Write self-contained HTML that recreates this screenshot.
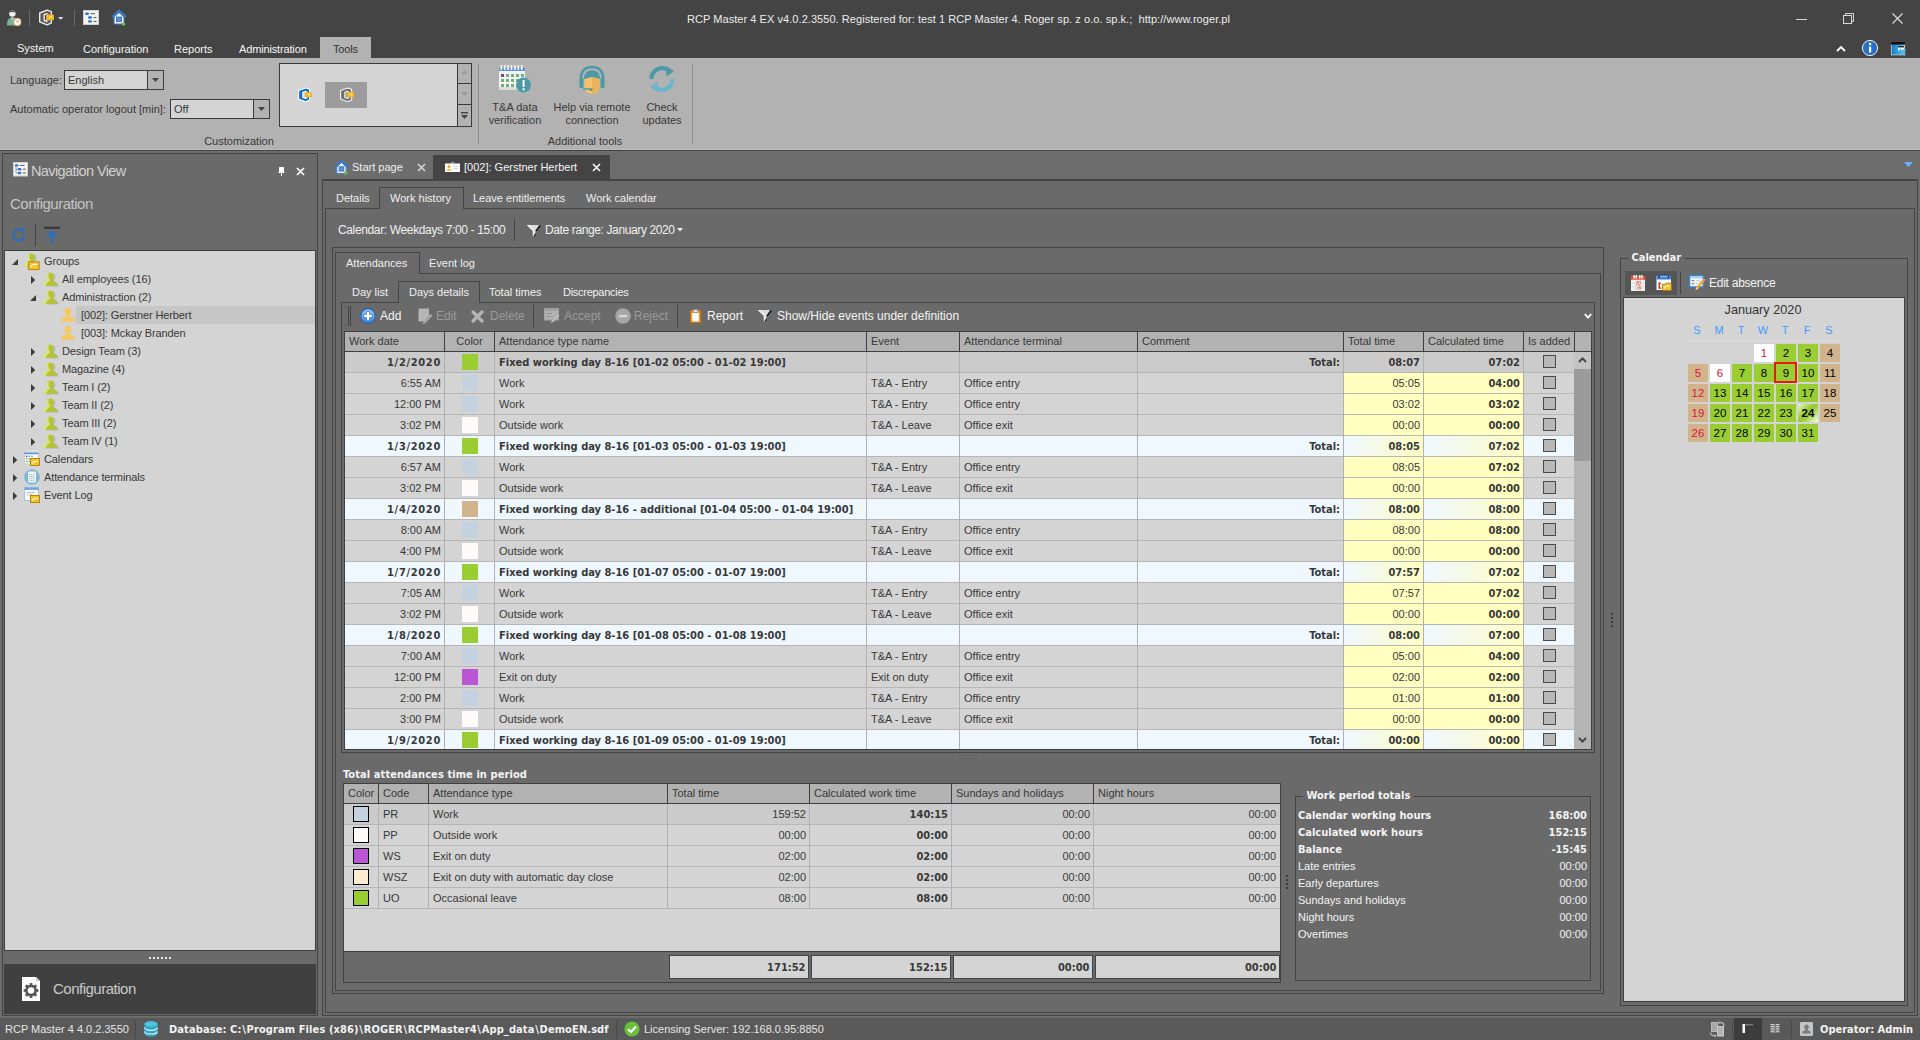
<!DOCTYPE html>
<html lang="en"><head><meta charset="utf-8"><title>RCP Master 4</title>
<style>
html,body{margin:0;padding:0;background:#6d6d6d;overflow:hidden}
#app{position:relative;width:1920px;height:1040px;overflow:hidden;background:#6d6d6d;font-family:"Liberation Sans","DejaVu Sans",sans-serif;font-size:11px;color:#383838}
#app span{position:static}
#app div,#app svg{position:absolute;box-sizing:border-box;white-space:nowrap}
#app svg{overflow:visible}
.b{font-family:"DejaVu Sans Condensed","DejaVu Sans","Liberation Sans",sans-serif;font-weight:bold;font-stretch:condensed;margin-top:1px}
.w{color:#f0f0f0}
.s12{font-size:12px}
.dis{color:#9a9a9a}
</style></head>
<body><div id="app">
<div style="left:0px;top:0px;width:1920px;height:58px;background:#444"></div>
<div style="left:0px;top:12.0px;height:14px;line-height:14px;width:1917px;text-align:center;color:#ececec;letter-spacing:0.055px">RCP Master 4 EX v4.0.2.3550. Registered for: test 1 RCP Master 4. Roger sp. z o.o. sp.k.;&nbsp; http://www.roger.pl</div>
<svg style="left:5px;top:9px" width="18" height="18" viewBox="0 0 18 18"><circle cx="7.4" cy="4.6" r="3.2" fill="#f6f2ea"/><path d="M4.4 3.6 C4.8 1.2 10 1.2 10.4 3.6 C9 2.8 6 2.8 4.4 3.6Z" fill="#3c4c5c"/><path d="M2 16.4 C2 10.4 4 8.6 7.4 8.6 C10.8 8.6 12.4 10 12.6 12 V16.4Z" fill="#78b09a"/><path d="M6.4 8.6 L7.4 11 L8.4 8.6Z" fill="#f6f2ea"/><circle cx="12.4" cy="13" r="3.7" fill="#fbf6ec" stroke="#e2b65c" stroke-width="0.9"/><path d="M12.4 13 L10.8 11.4 M12.4 13 L14 12.2" stroke="#b090a8" stroke-width="0.9"/></svg>
<div style="left:29px;top:10px;width:1px;height:16px;background:#6a6a6a"></div>
<svg style="left:38px;top:9px" width="17" height="18" viewBox="0 0 16 16.6"><path d="M1.6 3.6 L8.6 0.9 L12.6 2.3 V13 L8.6 14.8 L1.6 12Z M5.8 5.2 L8.6 4.3 V11.6 L5.8 10.5Z" fill="#5a5a5a" fill-rule="evenodd" stroke="#ececec" stroke-width="1.3" stroke-linejoin="round"/><path d="M8.6 3.9 L10.6 4.5 V11.2 L8.6 11.9Z" fill="#8a8a8a"/><rect x="8" y="5.2" width="7" height="5" fill="#f6b818"/><path d="M10.5 6.4H13L13.6 7.4V8.4H11.2Z" fill="#fbe08a"/></svg>
<svg style="left:58px;top:17px" width="6" height="4" viewBox="0 0 6 4"><path d="M0 0H5.4L2.7 2.8Z" fill="#e0e0e0"/></svg>
<div style="left:74px;top:10px;width:1px;height:16px;background:#6a6a6a"></div>
<svg style="left:83px;top:10px" width="16" height="16" viewBox="0 0 16 16"><rect x="0.5" y="0.5" width="15" height="14" fill="#f4f4f4" stroke="#cfcfcf"/><rect x="2" y="2.5" width="4" height="2.4" rx="1.2" fill="#2f78c4"/><rect x="5" y="6.3" width="4" height="2.4" rx="1.2" fill="#2f78c4"/><rect x="5" y="10.2" width="4" height="2.4" rx="1.2" fill="#2f78c4"/><path d="M7.5 3.7H12M10.5 7.5H13.5M10.5 11.4H13.5" stroke="#555" stroke-width="1"/></svg>
<svg style="left:111px;top:9px" width="16" height="17" viewBox="0 0 16 17"><path d="M1 8 L8 1.5 L15 8" fill="none" stroke="#3a78c8" stroke-width="2"/><path d="M3 8 L8 3.5 L13 8 V15 H3Z" fill="#eef3fb" stroke="#3a78c8" stroke-width="1"/><rect x="5.5" y="8" width="5" height="4.5" fill="#5b95dc" stroke="#2b62ab" stroke-width="0.8"/><circle cx="12.5" cy="15" r="1.8" fill="#6cc04a"/></svg>
<div style="left:1796px;top:19px;width:11px;height:1px;background:#d8d8d8"></div>
<svg style="left:1843px;top:13px" width="12" height="12" viewBox="0 0 12 12"><rect x="0.5" y="2.5" width="8" height="8" fill="none" stroke="#d8d8d8"/><path d="M2.5 2.5V0.5H10.5V8.5H8.5" fill="none" stroke="#d8d8d8"/></svg>
<svg style="left:1892px;top:13px" width="11" height="11" viewBox="0 0 11 11"><path d="M0.5 0.5L10.5 10.5M10.5 0.5L0.5 10.5" stroke="#e0e0e0" stroke-width="1.1"/></svg>
<div style="left:17px;top:41.0px;height:14px;line-height:14px;color:#f4f4f4">System</div>
<div style="left:83px;top:42.0px;height:14px;line-height:14px;color:#f4f4f4">Configuration</div>
<div style="left:174px;top:42.0px;height:14px;line-height:14px;color:#f4f4f4">Reports</div>
<div style="left:239px;top:42.0px;height:14px;line-height:14px;color:#f4f4f4;letter-spacing:-0.15px">Administration</div>
<div style="left:320px;top:37px;width:51px;height:22px;background:#b2b2b2"></div>
<div style="left:333px;top:42.0px;height:14px;line-height:14px;color:#333;letter-spacing:-0.2px">Tools</div>
<svg style="left:1836px;top:45px" width="10" height="7" viewBox="0 0 10 7"><path d="M1 6L5 2L9 6" fill="none" stroke="#fff" stroke-width="1.8"/></svg>
<svg style="left:1861px;top:39px" width="18" height="18" viewBox="0 0 18 18"><circle cx="9" cy="9" r="7.6" fill="#2c6fc2" stroke="#e8eefc" stroke-width="1"/><rect x="8" y="7.5" width="2.2" height="6" fill="#fff"/><circle cx="9.1" cy="5" r="1.3" fill="#fff"/></svg>
<svg style="left:1891px;top:42px" width="16" height="15" viewBox="0 0 16 15"><defs><linearGradient id="gw" x1="0" x2="1"><stop offset="0" stop-color="#0a78c8"/><stop offset="1" stop-color="#6cc4f4"/></linearGradient></defs><rect x="0.3" y="0.3" width="13.4" height="12.6" fill="url(#gw)" stroke="#e6ded6" stroke-width="0.7"/><rect x="0" y="0" width="14" height="2.6" fill="#141010"/><rect x="7" y="5" width="6" height="4" fill="#f4f4f4"/><rect x="7" y="4.2" width="6" height="1.2" fill="#141010"/><path d="M8.6 7.4 L14.2 13 M14.2 7.4 L8.6 13" stroke="#4db4f0" stroke-width="2.2"/></svg>
<div style="left:0px;top:58px;width:1920px;height:91px;background:#b2b2b2"></div>
<div style="left:0px;top:149px;width:1920px;height:1px;background:#bdbdbd"></div>
<div style="left:0px;top:150px;width:1920px;height:1px;background:#444"></div>
<div style="left:10px;top:73.0px;height:14px;line-height:14px;">Language:</div>
<div style="left:64px;top:70px;width:100px;height:20px;background:#d4d4d4;border:1px solid #3a3a3a"></div>
<div style="left:147px;top:71px;width:16px;height:18px;background:#b2b2b2;border-left:1px solid #3a3a3a"></div>
<svg style="left:152px;top:78px" width="7" height="4" viewBox="0 0 7 4"><path d="M0 0H7L3.5 4Z" fill="#444"/></svg>
<div style="left:68px;top:73.0px;height:14px;line-height:14px;">English</div>
<div style="left:10px;top:102.0px;height:14px;line-height:14px;">Automatic operator logout [min]:</div>
<div style="left:170px;top:99px;width:100px;height:20px;background:#d4d4d4;border:1px solid #3a3a3a"></div>
<div style="left:253px;top:100px;width:16px;height:18px;background:#b2b2b2;border-left:1px solid #3a3a3a"></div>
<svg style="left:258px;top:107px" width="7" height="4" viewBox="0 0 7 4"><path d="M0 0H7L3.5 4Z" fill="#444"/></svg>
<div style="left:174px;top:102.0px;height:14px;line-height:14px;">Off</div>
<div style="left:139px;top:134.0px;height:14px;line-height:14px;width:200px;text-align:center;">Customization</div>
<div style="left:279px;top:63px;width:193px;height:64px;background:#d4d4d4;border:1px solid #3a3a3a"></div>
<div style="left:457px;top:64px;width:14px;height:62px;background:#b2b2b2;border-left:1px solid #3a3a3a"></div>
<div style="left:457px;top:83px;width:14px;height:1px;background:#3a3a3a"></div>
<div style="left:457px;top:104px;width:14px;height:1px;background:#3a3a3a"></div>
<svg style="left:461px;top:70px" width="7" height="4" viewBox="0 0 7 4"><path d="M0 4H7L3.5 0Z" fill="#9a9a9a"/></svg>
<svg style="left:461px;top:92px" width="7" height="4" viewBox="0 0 7 4"><path d="M0 0H7L3.5 4Z" fill="#9a9a9a"/></svg>
<svg style="left:461px;top:112px" width="7" height="7" viewBox="0 0 7 7"><path d="M0 0H7V1.4H0Z M0 3H7L3.5 7Z" fill="#444"/></svg>
<div style="left:325px;top:82px;width:42px;height:26px;background:#9c9c9c"></div>
<svg style="left:297px;top:87px" width="16" height="16" viewBox="0 0 16 16"><path d="M1.6 3.6 L8.6 0.9 L12.6 2.3 V13 L8.6 14.8 L1.6 12Z M5.8 5.2 L8.6 4.3 V11.6 L5.8 10.5Z" fill="#0a6ed1" fill-rule="evenodd" stroke="#ffffff" stroke-width="1.1" stroke-linejoin="round"/><path d="M8.6 3.9 L10.6 4.5 V11.2 L8.6 11.9Z" fill="#d8e6f6"/><rect x="8" y="5.2" width="7" height="5" fill="#f6b818"/><path d="M10.5 6.4H13L13.6 7.4V8.4H11.2Z" fill="#fbe08a"/></svg>
<svg style="left:339px;top:87px" width="16" height="16" viewBox="0 0 16 16"><path d="M1.6 3.6 L8.6 0.9 L12.6 2.3 V13 L8.6 14.8 L1.6 12Z M5.8 5.2 L8.6 4.3 V11.6 L5.8 10.5Z" fill="#6e6e6e" fill-rule="evenodd" stroke="#f4f4f4" stroke-width="1.1" stroke-linejoin="round"/><path d="M8.6 3.9 L10.6 4.5 V11.2 L8.6 11.9Z" fill="#c8c8c8"/><rect x="8" y="5.2" width="7" height="5" fill="#f6b818"/><path d="M10.5 6.4H13L13.6 7.4V8.4H11.2Z" fill="#fbe08a"/></svg>
<div style="left:478px;top:64px;width:1px;height:80px;background:#8c8c8c"></div>
<div style="left:692px;top:64px;width:1px;height:80px;background:#8c8c8c"></div>
<svg style="left:498px;top:64px" width="34" height="30" viewBox="0 0 34 30"><rect x="1" y="4" width="26" height="22" fill="#f4f4f4"/><rect x="1" y="4" width="26" height="3" fill="#5b95dc"/><rect x="1" y="23" width="26" height="3" fill="#dcdcdc"/><rect x="2.5" y="1" width="1.6" height="5" fill="#f4f4f4"/><rect x="5.9" y="1" width="1.6" height="5" fill="#f4f4f4"/><rect x="9.3" y="1" width="1.6" height="5" fill="#f4f4f4"/><rect x="12.7" y="1" width="1.6" height="5" fill="#f4f4f4"/><rect x="16.1" y="1" width="1.6" height="5" fill="#f4f4f4"/><rect x="19.5" y="1" width="1.6" height="5" fill="#f4f4f4"/><rect x="22.9" y="1" width="1.6" height="5" fill="#f4f4f4"/><rect x="3" y="10" width="3" height="3" fill="#7a3f98"/><rect x="8" y="10" width="3" height="3" fill="#6db27d"/><rect x="13" y="10" width="3" height="3" fill="#6db27d"/><rect x="18" y="10" width="3" height="3" fill="#6db27d"/><rect x="23" y="10" width="3" height="3" fill="#6db27d"/><rect x="3" y="15" width="3" height="3" fill="#6db27d"/><rect x="8" y="15" width="3" height="3" fill="#6db27d"/><rect x="13" y="15" width="3" height="3" fill="#6db27d"/><rect x="18" y="15" width="3" height="3" fill="#6db27d"/><rect x="23" y="15" width="3" height="3" fill="#6db27d"/><rect x="3" y="20" width="3" height="3" fill="#6db27d"/><rect x="8" y="20" width="3" height="3" fill="#6db27d"/><rect x="13" y="20" width="3" height="3" fill="#6db27d"/><rect x="18" y="20" width="3" height="3" fill="#6db27d"/><rect x="23" y="20" width="3" height="3" fill="#6db27d"/><circle cx="25.5" cy="21" r="7.5" fill="#4d9aa6"/><rect x="24.6" y="16" width="2" height="7" fill="#fff"/><rect x="24.6" y="24.3" width="2" height="2" fill="#fff"/></svg>
<svg style="left:578px;top:65px" width="28" height="31" viewBox="0 0 28 31"><path d="M3 18 V13 C3 5 8 2 14 2 C20 2 25 5 25 13 V18" fill="none" stroke="#4d9aa6" stroke-width="2.6"/><path d="M6 14 C6 8 9 5.5 14 5.5 C19 5.5 22 8 22 14 L20 15 H8Z" fill="#4d9aa6"/><path d="M6.5 14 L14 12 L21.5 14 V21 C21.5 26 18 29 14 29 C10 29 6.5 26 6.5 21Z" fill="#f5c26b"/><path d="M14 12 L21.5 14 V21 C21.5 26 18 29 14 29Z" fill="#eab45a"/><rect x="1.5" y="13" width="4" height="10" rx="1.5" fill="#4d9aa6"/><rect x="22.5" y="13" width="4" height="10" rx="1.5" fill="#4d9aa6"/><path d="M5 24 H12" stroke="#4d9aa6" stroke-width="1.4"/><circle cx="13" cy="24.5" r="1.6" fill="#4d9aa6"/></svg>
<svg style="left:647px;top:64px" width="30" height="30" viewBox="0 0 30 30"><path d="M4.5 15 A10.5 10.5 0 0 1 22 7" fill="none" stroke="#4d9aa6" stroke-width="4.2"/><path d="M19 2 L27 7 L19.5 12.5Z" fill="#4d9aa6"/><path d="M25.5 15 A10.5 10.5 0 0 1 8 23" fill="none" stroke="#69b5c9" stroke-width="4.2"/><path d="M11 28 L3 23 L10.5 17.5Z" fill="#69b5c9"/></svg>
<div style="left:465px;top:100.0px;height:14px;line-height:14px;width:100px;text-align:center;">T&amp;A data</div>
<div style="left:465px;top:113.0px;height:14px;line-height:14px;width:100px;text-align:center;">verification</div>
<div style="left:532px;top:100.0px;height:14px;line-height:14px;width:120px;text-align:center;">Help via remote</div>
<div style="left:532px;top:113.0px;height:14px;line-height:14px;width:120px;text-align:center;">connection</div>
<div style="left:612px;top:100.0px;height:14px;line-height:14px;width:100px;text-align:center;">Check</div>
<div style="left:612px;top:113.0px;height:14px;line-height:14px;width:100px;text-align:center;">updates</div>
<div style="left:485px;top:134.0px;height:14px;line-height:14px;width:200px;text-align:center;">Additional tools</div>
<div style="left:2px;top:153px;width:316px;height:863px;background:#6a6a6a;border:1px solid #444"></div>
<svg style="left:13px;top:162px" width="15" height="15" viewBox="0 0 15 15"><rect x="0.5" y="0.5" width="14" height="13.5" fill="#f6f6f6" stroke="#cfcfcf"/><rect x="1.8" y="2.2" width="3.8" height="2.4" rx="1.2" fill="#2f78c4"/><rect x="4.6" y="6" width="3.8" height="2.4" rx="1.2" fill="#2f78c4"/><rect x="4.6" y="9.8" width="3.8" height="2.4" rx="1.2" fill="#2f78c4"/><path d="M7 3.4H11.5M9.8 7.2H12.8M9.8 11H12.8" stroke="#555" stroke-width="1"/><path d="M3 4.6V11H4.6M3 7.2H4.6" stroke="#777" stroke-width="0.7" fill="none"/></svg>
<div style="left:31px;top:162.0px;height:18px;line-height:18px;color:#d0d0d0;font-size:14.5px;letter-spacing:-0.6px">Navigation View</div>
<svg style="left:278px;top:167px" width="7" height="9" viewBox="0 0 7 9"><path d="M1.5 0.5H5.5V5H1.5Z M0.5 5.5H6.5 M3.5 5.5V9" fill="#fff" stroke="#fff" stroke-width="1"/></svg>
<svg style="left:296px;top:167px" width="9" height="9" viewBox="0 0 9 9"><path d="M1 1L8 8M8 1L1 8" stroke="#fff" stroke-width="1.7"/></svg>
<div style="left:10px;top:195.0px;height:18px;line-height:18px;color:#c4c4c4;font-size:15px;letter-spacing:-0.5px">Configuration</div>
<svg style="left:11px;top:227px" width="16" height="16" viewBox="0 0 16 16"><path d="M13.2 8 A5.6 5.6 0 1 1 10.6 3.2" fill="none" stroke="#2f6db5" stroke-width="2.4"/><path d="M8.6 0.8 L14.4 1.2 L12.6 6.6Z" fill="#2f6db5"/></svg>
<div style="left:35px;top:224px;width:1px;height:22px;background:#444"></div>
<svg style="left:44px;top:226px" width="16" height="18" viewBox="0 0 16 18"><rect x="0" y="0.6" width="16" height="2.4" fill="#3a3a3a"/><path d="M8 4 L14.4 10.2 H9.6 V17 H6.4 V10.2 H1.6Z" fill="#2f6db5"/></svg>
<div style="left:4px;top:250px;width:312px;height:701px;background:#d4d4d4;border:1px solid #3f3f3f"></div>
<div style="left:76px;top:306px;width:239px;height:18px;background:#c6c6c6"></div>
<svg style="left:12px;top:259px" width="6" height="6" viewBox="0 0 6 6"><path d="M6 0V6H0Z" fill="#3c3c3c"/></svg>
<svg style="left:22.5px;top:253px" width="16.6" height="16.6" viewBox="0 0 16 16"><path d="M9 1 C11.2 1 12.2 2.6 12.2 4.4 C12.2 6 11.4 7.2 10.6 7.8 V8.8 C13.6 9.4 15.4 10.4 15.4 13.4 H2.6 C2.6 10.4 4.4 9.4 7.4 8.8 V7.8 C6.6 7.2 5.8 6 5.8 4.4 C5.8 2.6 6.8 1 9 1Z" fill="#9a9a9a" opacity=".45" transform="translate(0.8,0.5)"/><path d="M8 0.6 C10.2 0.6 11.3 2.2 11.3 4 C11.3 5.6 10.5 6.9 9.7 7.5 V8.5 C12.8 9.1 14.6 10.2 14.6 13.2 H1.4 C1.4 10.2 3.2 9.1 6.3 8.5 V7.5 C5.5 6.9 4.7 5.6 4.7 4 C4.7 2.2 5.8 0.6 8 0.6Z" fill="#b4c531"/><path d="M7 0.9 C5.4 1.4 4.7 2.6 4.7 4 C4.7 5.6 5.5 6.9 6.3 7.5 V8.5 C3.2 9.1 1.4 10.2 1.4 13.2 H4 C4 10.6 5.6 9.6 7.6 9 V7 C6.6 6.2 6.2 5 6.2 3.8 C6.2 2.4 6.5 1.6 7 0.9Z" fill="#dfe87a"/><rect x="5.5" y="8.5" width="10" height="7.5" fill="#f4c430" stroke="#b8860b" stroke-width="1"/><path d="M7 13.5 L9.5 11 H14" stroke="#fff7d0" stroke-width="1.2" fill="none"/></svg>
<div style="left:44px;top:254.0px;height:14px;line-height:14px;letter-spacing:-0.12px">Groups</div>
<svg style="left:31px;top:276px" width="5" height="8" viewBox="0 0 5 8"><path d="M0 0L4.2 4L0 8Z" fill="#3c3c3c"/></svg>
<svg style="left:41.5px;top:272px" width="16.6" height="16.6" viewBox="0 0 16 16"><path d="M9 1 C11.2 1 12.2 2.6 12.2 4.4 C12.2 6 11.4 7.2 10.6 7.8 V8.8 C13.6 9.4 15.4 10.4 15.4 13.4 H2.6 C2.6 10.4 4.4 9.4 7.4 8.8 V7.8 C6.6 7.2 5.8 6 5.8 4.4 C5.8 2.6 6.8 1 9 1Z" fill="#9a9a9a" opacity=".45" transform="translate(0.8,0.5)"/><path d="M8 0.6 C10.2 0.6 11.3 2.2 11.3 4 C11.3 5.6 10.5 6.9 9.7 7.5 V8.5 C12.8 9.1 14.6 10.2 14.6 13.2 H1.4 C1.4 10.2 3.2 9.1 6.3 8.5 V7.5 C5.5 6.9 4.7 5.6 4.7 4 C4.7 2.2 5.8 0.6 8 0.6Z" fill="#b4c531"/><path d="M7 0.9 C5.4 1.4 4.7 2.6 4.7 4 C4.7 5.6 5.5 6.9 6.3 7.5 V8.5 C3.2 9.1 1.4 10.2 1.4 13.2 H4 C4 10.6 5.6 9.6 7.6 9 V7 C6.6 6.2 6.2 5 6.2 3.8 C6.2 2.4 6.5 1.6 7 0.9Z" fill="#dfe87a"/></svg>
<div style="left:62px;top:272.0px;height:14px;line-height:14px;letter-spacing:-0.12px">All employees (16)</div>
<svg style="left:30px;top:295px" width="6" height="6" viewBox="0 0 6 6"><path d="M6 0V6H0Z" fill="#3c3c3c"/></svg>
<svg style="left:41.5px;top:290px" width="16.6" height="16.6" viewBox="0 0 16 16"><path d="M9 1 C11.2 1 12.2 2.6 12.2 4.4 C12.2 6 11.4 7.2 10.6 7.8 V8.8 C13.6 9.4 15.4 10.4 15.4 13.4 H2.6 C2.6 10.4 4.4 9.4 7.4 8.8 V7.8 C6.6 7.2 5.8 6 5.8 4.4 C5.8 2.6 6.8 1 9 1Z" fill="#9a9a9a" opacity=".45" transform="translate(0.8,0.5)"/><path d="M8 0.6 C10.2 0.6 11.3 2.2 11.3 4 C11.3 5.6 10.5 6.9 9.7 7.5 V8.5 C12.8 9.1 14.6 10.2 14.6 13.2 H1.4 C1.4 10.2 3.2 9.1 6.3 8.5 V7.5 C5.5 6.9 4.7 5.6 4.7 4 C4.7 2.2 5.8 0.6 8 0.6Z" fill="#b4c531"/><path d="M7 0.9 C5.4 1.4 4.7 2.6 4.7 4 C4.7 5.6 5.5 6.9 6.3 7.5 V8.5 C3.2 9.1 1.4 10.2 1.4 13.2 H4 C4 10.6 5.6 9.6 7.6 9 V7 C6.6 6.2 6.2 5 6.2 3.8 C6.2 2.4 6.5 1.6 7 0.9Z" fill="#dfe87a"/></svg>
<div style="left:62px;top:290.0px;height:14px;line-height:14px;letter-spacing:-0.12px">Administraction (2)</div>
<svg style="left:60px;top:307px" width="16" height="16" viewBox="0 0 16 16"><path d="M8 0.8 C10.3 0.8 11.5 2.6 11.5 4.6 C11.5 6.4 10.6 7.8 9.8 8.4 V9.6 C13 10.2 15.2 11.4 15.2 14.8 H0.8 C0.8 11.4 3 10.2 6.2 9.6 V8.4 C5.4 7.8 4.5 6.4 4.5 4.6 C4.5 2.6 5.7 0.8 8 0.8Z" fill="#f3c866"/></svg>
<div style="left:81px;top:308.0px;height:14px;line-height:14px;letter-spacing:-0.12px">[002]: Gerstner Herbert</div>
<svg style="left:60px;top:325px" width="16" height="16" viewBox="0 0 16 16"><path d="M8 0.8 C10.3 0.8 11.5 2.6 11.5 4.6 C11.5 6.4 10.6 7.8 9.8 8.4 V9.6 C13 10.2 15.2 11.4 15.2 14.8 H0.8 C0.8 11.4 3 10.2 6.2 9.6 V8.4 C5.4 7.8 4.5 6.4 4.5 4.6 C4.5 2.6 5.7 0.8 8 0.8Z" fill="#f3c866"/></svg>
<div style="left:81px;top:326.0px;height:14px;line-height:14px;letter-spacing:-0.12px">[003]: Mckay Branden</div>
<svg style="left:31px;top:348px" width="5" height="8" viewBox="0 0 5 8"><path d="M0 0L4.2 4L0 8Z" fill="#3c3c3c"/></svg>
<svg style="left:41.5px;top:344px" width="16.6" height="16.6" viewBox="0 0 16 16"><path d="M9 1 C11.2 1 12.2 2.6 12.2 4.4 C12.2 6 11.4 7.2 10.6 7.8 V8.8 C13.6 9.4 15.4 10.4 15.4 13.4 H2.6 C2.6 10.4 4.4 9.4 7.4 8.8 V7.8 C6.6 7.2 5.8 6 5.8 4.4 C5.8 2.6 6.8 1 9 1Z" fill="#9a9a9a" opacity=".45" transform="translate(0.8,0.5)"/><path d="M8 0.6 C10.2 0.6 11.3 2.2 11.3 4 C11.3 5.6 10.5 6.9 9.7 7.5 V8.5 C12.8 9.1 14.6 10.2 14.6 13.2 H1.4 C1.4 10.2 3.2 9.1 6.3 8.5 V7.5 C5.5 6.9 4.7 5.6 4.7 4 C4.7 2.2 5.8 0.6 8 0.6Z" fill="#b4c531"/><path d="M7 0.9 C5.4 1.4 4.7 2.6 4.7 4 C4.7 5.6 5.5 6.9 6.3 7.5 V8.5 C3.2 9.1 1.4 10.2 1.4 13.2 H4 C4 10.6 5.6 9.6 7.6 9 V7 C6.6 6.2 6.2 5 6.2 3.8 C6.2 2.4 6.5 1.6 7 0.9Z" fill="#dfe87a"/></svg>
<div style="left:62px;top:344.0px;height:14px;line-height:14px;letter-spacing:-0.12px">Design Team (3)</div>
<svg style="left:31px;top:366px" width="5" height="8" viewBox="0 0 5 8"><path d="M0 0L4.2 4L0 8Z" fill="#3c3c3c"/></svg>
<svg style="left:41.5px;top:362px" width="16.6" height="16.6" viewBox="0 0 16 16"><path d="M9 1 C11.2 1 12.2 2.6 12.2 4.4 C12.2 6 11.4 7.2 10.6 7.8 V8.8 C13.6 9.4 15.4 10.4 15.4 13.4 H2.6 C2.6 10.4 4.4 9.4 7.4 8.8 V7.8 C6.6 7.2 5.8 6 5.8 4.4 C5.8 2.6 6.8 1 9 1Z" fill="#9a9a9a" opacity=".45" transform="translate(0.8,0.5)"/><path d="M8 0.6 C10.2 0.6 11.3 2.2 11.3 4 C11.3 5.6 10.5 6.9 9.7 7.5 V8.5 C12.8 9.1 14.6 10.2 14.6 13.2 H1.4 C1.4 10.2 3.2 9.1 6.3 8.5 V7.5 C5.5 6.9 4.7 5.6 4.7 4 C4.7 2.2 5.8 0.6 8 0.6Z" fill="#b4c531"/><path d="M7 0.9 C5.4 1.4 4.7 2.6 4.7 4 C4.7 5.6 5.5 6.9 6.3 7.5 V8.5 C3.2 9.1 1.4 10.2 1.4 13.2 H4 C4 10.6 5.6 9.6 7.6 9 V7 C6.6 6.2 6.2 5 6.2 3.8 C6.2 2.4 6.5 1.6 7 0.9Z" fill="#dfe87a"/></svg>
<div style="left:62px;top:362.0px;height:14px;line-height:14px;letter-spacing:-0.12px">Magazine (4)</div>
<svg style="left:31px;top:384px" width="5" height="8" viewBox="0 0 5 8"><path d="M0 0L4.2 4L0 8Z" fill="#3c3c3c"/></svg>
<svg style="left:41.5px;top:380px" width="16.6" height="16.6" viewBox="0 0 16 16"><path d="M9 1 C11.2 1 12.2 2.6 12.2 4.4 C12.2 6 11.4 7.2 10.6 7.8 V8.8 C13.6 9.4 15.4 10.4 15.4 13.4 H2.6 C2.6 10.4 4.4 9.4 7.4 8.8 V7.8 C6.6 7.2 5.8 6 5.8 4.4 C5.8 2.6 6.8 1 9 1Z" fill="#9a9a9a" opacity=".45" transform="translate(0.8,0.5)"/><path d="M8 0.6 C10.2 0.6 11.3 2.2 11.3 4 C11.3 5.6 10.5 6.9 9.7 7.5 V8.5 C12.8 9.1 14.6 10.2 14.6 13.2 H1.4 C1.4 10.2 3.2 9.1 6.3 8.5 V7.5 C5.5 6.9 4.7 5.6 4.7 4 C4.7 2.2 5.8 0.6 8 0.6Z" fill="#b4c531"/><path d="M7 0.9 C5.4 1.4 4.7 2.6 4.7 4 C4.7 5.6 5.5 6.9 6.3 7.5 V8.5 C3.2 9.1 1.4 10.2 1.4 13.2 H4 C4 10.6 5.6 9.6 7.6 9 V7 C6.6 6.2 6.2 5 6.2 3.8 C6.2 2.4 6.5 1.6 7 0.9Z" fill="#dfe87a"/></svg>
<div style="left:62px;top:380.0px;height:14px;line-height:14px;letter-spacing:-0.12px">Team I (2)</div>
<svg style="left:31px;top:402px" width="5" height="8" viewBox="0 0 5 8"><path d="M0 0L4.2 4L0 8Z" fill="#3c3c3c"/></svg>
<svg style="left:41.5px;top:398px" width="16.6" height="16.6" viewBox="0 0 16 16"><path d="M9 1 C11.2 1 12.2 2.6 12.2 4.4 C12.2 6 11.4 7.2 10.6 7.8 V8.8 C13.6 9.4 15.4 10.4 15.4 13.4 H2.6 C2.6 10.4 4.4 9.4 7.4 8.8 V7.8 C6.6 7.2 5.8 6 5.8 4.4 C5.8 2.6 6.8 1 9 1Z" fill="#9a9a9a" opacity=".45" transform="translate(0.8,0.5)"/><path d="M8 0.6 C10.2 0.6 11.3 2.2 11.3 4 C11.3 5.6 10.5 6.9 9.7 7.5 V8.5 C12.8 9.1 14.6 10.2 14.6 13.2 H1.4 C1.4 10.2 3.2 9.1 6.3 8.5 V7.5 C5.5 6.9 4.7 5.6 4.7 4 C4.7 2.2 5.8 0.6 8 0.6Z" fill="#b4c531"/><path d="M7 0.9 C5.4 1.4 4.7 2.6 4.7 4 C4.7 5.6 5.5 6.9 6.3 7.5 V8.5 C3.2 9.1 1.4 10.2 1.4 13.2 H4 C4 10.6 5.6 9.6 7.6 9 V7 C6.6 6.2 6.2 5 6.2 3.8 C6.2 2.4 6.5 1.6 7 0.9Z" fill="#dfe87a"/></svg>
<div style="left:62px;top:398.0px;height:14px;line-height:14px;letter-spacing:-0.12px">Team II (2)</div>
<svg style="left:31px;top:420px" width="5" height="8" viewBox="0 0 5 8"><path d="M0 0L4.2 4L0 8Z" fill="#3c3c3c"/></svg>
<svg style="left:41.5px;top:416px" width="16.6" height="16.6" viewBox="0 0 16 16"><path d="M9 1 C11.2 1 12.2 2.6 12.2 4.4 C12.2 6 11.4 7.2 10.6 7.8 V8.8 C13.6 9.4 15.4 10.4 15.4 13.4 H2.6 C2.6 10.4 4.4 9.4 7.4 8.8 V7.8 C6.6 7.2 5.8 6 5.8 4.4 C5.8 2.6 6.8 1 9 1Z" fill="#9a9a9a" opacity=".45" transform="translate(0.8,0.5)"/><path d="M8 0.6 C10.2 0.6 11.3 2.2 11.3 4 C11.3 5.6 10.5 6.9 9.7 7.5 V8.5 C12.8 9.1 14.6 10.2 14.6 13.2 H1.4 C1.4 10.2 3.2 9.1 6.3 8.5 V7.5 C5.5 6.9 4.7 5.6 4.7 4 C4.7 2.2 5.8 0.6 8 0.6Z" fill="#b4c531"/><path d="M7 0.9 C5.4 1.4 4.7 2.6 4.7 4 C4.7 5.6 5.5 6.9 6.3 7.5 V8.5 C3.2 9.1 1.4 10.2 1.4 13.2 H4 C4 10.6 5.6 9.6 7.6 9 V7 C6.6 6.2 6.2 5 6.2 3.8 C6.2 2.4 6.5 1.6 7 0.9Z" fill="#dfe87a"/></svg>
<div style="left:62px;top:416.0px;height:14px;line-height:14px;letter-spacing:-0.12px">Team III (2)</div>
<svg style="left:31px;top:438px" width="5" height="8" viewBox="0 0 5 8"><path d="M0 0L4.2 4L0 8Z" fill="#3c3c3c"/></svg>
<svg style="left:41.5px;top:434px" width="16.6" height="16.6" viewBox="0 0 16 16"><path d="M9 1 C11.2 1 12.2 2.6 12.2 4.4 C12.2 6 11.4 7.2 10.6 7.8 V8.8 C13.6 9.4 15.4 10.4 15.4 13.4 H2.6 C2.6 10.4 4.4 9.4 7.4 8.8 V7.8 C6.6 7.2 5.8 6 5.8 4.4 C5.8 2.6 6.8 1 9 1Z" fill="#9a9a9a" opacity=".45" transform="translate(0.8,0.5)"/><path d="M8 0.6 C10.2 0.6 11.3 2.2 11.3 4 C11.3 5.6 10.5 6.9 9.7 7.5 V8.5 C12.8 9.1 14.6 10.2 14.6 13.2 H1.4 C1.4 10.2 3.2 9.1 6.3 8.5 V7.5 C5.5 6.9 4.7 5.6 4.7 4 C4.7 2.2 5.8 0.6 8 0.6Z" fill="#b4c531"/><path d="M7 0.9 C5.4 1.4 4.7 2.6 4.7 4 C4.7 5.6 5.5 6.9 6.3 7.5 V8.5 C3.2 9.1 1.4 10.2 1.4 13.2 H4 C4 10.6 5.6 9.6 7.6 9 V7 C6.6 6.2 6.2 5 6.2 3.8 C6.2 2.4 6.5 1.6 7 0.9Z" fill="#dfe87a"/></svg>
<div style="left:62px;top:434.0px;height:14px;line-height:14px;letter-spacing:-0.12px">Team IV (1)</div>
<svg style="left:13px;top:456px" width="5" height="8" viewBox="0 0 5 8"><path d="M0 0L4.2 4L0 8Z" fill="#3c3c3c"/></svg>
<svg style="left:24px;top:450px" width="16" height="16" viewBox="0 0 16 16"><rect x="0.5" y="2" width="14" height="12" fill="#fafafa" stroke="#c8c8c8"/><rect x="0.5" y="2" width="14" height="2.2" fill="#5b95dc"/><rect x="1.6" y="0" width="1" height="3" fill="#e8e8e8"/><rect x="3.6" y="0" width="1" height="3" fill="#e8e8e8"/><rect x="5.6" y="0" width="1" height="3" fill="#e8e8e8"/><rect x="7.6" y="0" width="1" height="3" fill="#e8e8e8"/><rect x="9.6" y="0" width="1" height="3" fill="#e8e8e8"/><rect x="11.6" y="0" width="1" height="3" fill="#e8e8e8"/><rect x="13.6" y="0" width="1" height="3" fill="#e8e8e8"/><rect x="2.0" y="5.6" width="1.5" height="1.5" fill="#7a3f98"/><rect x="4.6" y="5.6" width="1.5" height="1.5" fill="#6db27d"/><rect x="7.2" y="5.6" width="1.5" height="1.5" fill="#6db27d"/><rect x="2.0" y="8.2" width="1.5" height="1.5" fill="#6db27d"/><rect x="4.6" y="8.2" width="1.5" height="1.5" fill="#6db27d"/><rect x="7.2" y="8.2" width="1.5" height="1.5" fill="#6db27d"/><rect x="2.0" y="10.8" width="1.5" height="1.5" fill="#6db27d"/><rect x="4.6" y="10.8" width="1.5" height="1.5" fill="#6db27d"/><rect x="7.2" y="10.8" width="1.5" height="1.5" fill="#6db27d"/><rect x="6.5" y="8.5" width="9" height="7" fill="#f4c430" stroke="#b8860b" stroke-width="1"/><path d="M8 13.5 L10 11.5 H14" stroke="#fff7d0" stroke-width="1.1" fill="none"/></svg>
<div style="left:44px;top:452.0px;height:14px;line-height:14px;letter-spacing:-0.12px">Calendars</div>
<svg style="left:13px;top:474px" width="5" height="8" viewBox="0 0 5 8"><path d="M0 0L4.2 4L0 8Z" fill="#3c3c3c"/></svg>
<svg style="left:24px;top:469px" width="16" height="16" viewBox="0 0 16 16"><circle cx="8" cy="8" r="7.8" fill="#7db9d6"/><rect x="4" y="2.6" width="8" height="10.8" rx="1" fill="#f4f8fb"/><rect x="5.2" y="5" width="1.2" height="1.2" fill="#9fb9c8"/><rect x="7.2" y="5" width="1.2" height="1.2" fill="#9fb9c8"/><rect x="9.2" y="5" width="1.2" height="1.2" fill="#9fb9c8"/><rect x="5.2" y="7" width="1.2" height="1.2" fill="#9fb9c8"/><rect x="7.2" y="7" width="1.2" height="1.2" fill="#9fb9c8"/><rect x="9.2" y="7" width="1.2" height="1.2" fill="#9fb9c8"/><rect x="5.2" y="9" width="1.2" height="1.2" fill="#9fb9c8"/><rect x="7.2" y="9" width="1.2" height="1.2" fill="#9fb9c8"/><rect x="9.2" y="9" width="1.2" height="1.2" fill="#9fb9c8"/><rect x="5.2" y="11" width="1.2" height="1.2" fill="#9fb9c8"/><rect x="7.2" y="11" width="1.2" height="1.2" fill="#9fb9c8"/><rect x="9.2" y="11" width="1.2" height="1.2" fill="#9fb9c8"/></svg>
<div style="left:44px;top:470.0px;height:14px;line-height:14px;letter-spacing:-0.12px">Attendance terminals</div>
<svg style="left:13px;top:492px" width="5" height="8" viewBox="0 0 5 8"><path d="M0 0L4.2 4L0 8Z" fill="#3c3c3c"/></svg>
<svg style="left:24px;top:487px" width="16" height="16" viewBox="0 0 16 16"><rect x="0.5" y="0.5" width="14" height="13" fill="#fafafa" stroke="#9fc4e8"/><rect x="0.5" y="0.5" width="14" height="2.4" fill="#6aa5e0"/><path d="M2.5 5.5H11M2.5 7.8H8" stroke="#bbb" stroke-width="1"/><rect x="6.5" y="8.5" width="9" height="7" fill="#f4c430" stroke="#b8860b" stroke-width="1"/><path d="M8 13.5 L10 11.5 H14" stroke="#fff7d0" stroke-width="1.1" fill="none"/></svg>
<div style="left:44px;top:488.0px;height:14px;line-height:14px;letter-spacing:-0.12px">Event Log</div>
<div style="left:149px;top:957px;width:2px;height:2px;background:#e8e8e8"></div>
<div style="left:153px;top:957px;width:2px;height:2px;background:#e8e8e8"></div>
<div style="left:157px;top:957px;width:2px;height:2px;background:#e8e8e8"></div>
<div style="left:161px;top:957px;width:2px;height:2px;background:#e8e8e8"></div>
<div style="left:165px;top:957px;width:2px;height:2px;background:#e8e8e8"></div>
<div style="left:169px;top:957px;width:2px;height:2px;background:#e8e8e8"></div>
<div style="left:4px;top:964px;width:312px;height:50px;background:#404040"></div>
<svg style="left:22px;top:977px" width="18" height="24" viewBox="0 0 18 24"><path d="M0 0H14L18 4V24H0Z" fill="#fff"/><path d="M14 0V4H18Z" fill="#ccc"/><g transform="translate(9,13.5)"><circle r="4.6" fill="none" stroke="#555" stroke-width="2.6"/><rect x="-1.3" y="-7.4" width="2.6" height="3" fill="#555" transform="rotate(0)"/><rect x="-1.3" y="-7.4" width="2.6" height="3" fill="#555" transform="rotate(45)"/><rect x="-1.3" y="-7.4" width="2.6" height="3" fill="#555" transform="rotate(90)"/><rect x="-1.3" y="-7.4" width="2.6" height="3" fill="#555" transform="rotate(135)"/><rect x="-1.3" y="-7.4" width="2.6" height="3" fill="#555" transform="rotate(180)"/><rect x="-1.3" y="-7.4" width="2.6" height="3" fill="#555" transform="rotate(225)"/><rect x="-1.3" y="-7.4" width="2.6" height="3" fill="#555" transform="rotate(270)"/><rect x="-1.3" y="-7.4" width="2.6" height="3" fill="#555" transform="rotate(315)"/></g></svg>
<div style="left:53px;top:980.0px;height:18px;line-height:18px;color:#c9c9c9;font-size:15px;letter-spacing:-0.5px">Configuration</div>
<div style="left:0px;top:1018px;width:1920px;height:22px;background:#595959"></div>
<div style="left:5px;top:1022.0px;height:14px;line-height:14px;color:#e6e6e6">RCP Master 4 4.0.2.3550</div>
<div style="left:135px;top:1020px;width:1px;height:18px;background:#4a4a4a"></div>
<svg style="left:144px;top:1021px" width="14" height="16" viewBox="0 0 14 16"><path d="M0.5 3 A6.5 2.8 0 0 1 13.5 3 V13 A6.5 2.8 0 0 1 0.5 13Z" fill="#2fa6c6"/><ellipse cx="7" cy="3" rx="6.5" ry="2.8" fill="#4fc4de"/><path d="M0.5 6.6 A6.5 2.8 0 0 0 13.5 6.6 M0.5 10.2 A6.5 2.8 0 0 0 13.5 10.2" stroke="#d8f2f8" stroke-width="1.1" fill="none"/></svg>
<div class="b" style="left:169px;top:1022.0px;height:14px;line-height:14px;color:#f2f2f2;letter-spacing:0.1px">Database: C:<span style="padding:0 0.7px">\</span>Program Files (x86)<span style="padding:0 0.7px">\</span>ROGER<span style="padding:0 0.7px">\</span>RCPMaster4<span style="padding:0 0.7px">\</span>App_data<span style="padding:0 0.7px">\</span>DemoEN.sdf</div>
<div style="left:616px;top:1020px;width:1px;height:18px;background:#4a4a4a"></div>
<svg style="left:624px;top:1021px" width="16" height="16" viewBox="0 0 16 16"><circle cx="8" cy="8" r="7.6" fill="#6abf3a"/><path d="M4 8.2 L7 11 L12 5.4" fill="none" stroke="#fff" stroke-width="2.2"/></svg>
<div style="left:644px;top:1022.0px;height:14px;line-height:14px;color:#e6e6e6">Licensing Server: 192.168.0.95:8850</div>
<svg style="left:1709px;top:1021px" width="17" height="16" viewBox="0 0 17 16"><path d="M2 1H9V11H2Z" fill="#b8b8b8"/><path d="M3 3H8M3 5H8M3 7H8M3 9H8" stroke="#8a8a8a" stroke-width="0.8"/><path d="M8 5H15V15.5H8Z" fill="#c8c8c8"/><path d="M9 7H14M9 9H14M9 11H14M9 13H14" stroke="#909090" stroke-width="0.8"/><path d="M11 1.5 C13.5 1.5 15 3 15 5" stroke="#b0b0b0" stroke-width="1.4" fill="none"/><path d="M9.6 0 V3.4 L12.4 1.6Z" fill="#b0b0b0"/><path d="M6 15 C3.5 15 1.5 13.5 1.5 11.5" stroke="#b0b0b0" stroke-width="1.4" fill="none"/><path d="M7 13 V16.4 L4.4 14.8Z" fill="#b0b0b0"/></svg>
<div style="left:1732px;top:1020px;width:1px;height:18px;background:#4a4a4a"></div>
<div style="left:1734px;top:1018px;width:28px;height:22px;background:#3c3c3c"></div>
<svg style="left:1742px;top:1024px" width="11" height="9" viewBox="0 0 11 9"><rect x="0.5" y="0" width="10.5" height="1.4" fill="#7a7a7a"/><rect x="0.5" y="0" width="2.5" height="9" fill="#fafafa"/></svg>
<svg style="left:1770px;top:1024px" width="10" height="10" viewBox="0 0 10 10"><path d="M0.5 0.6H4.2M0.5 2.4H4.2M0.5 4.2H4.2M0.5 6H4.2M0.5 7.8H4.2 M5.8 0.6H9.5M5.8 2.4H9.5M5.8 4.2H9.5M5.8 6H9.5M5.8 7.8H9.5" stroke="#f0f0f0" stroke-width="0.9"/><path d="M4.9 0V9" stroke="#d0d0d0" stroke-width="0.6"/></svg>
<div style="left:1791px;top:1020px;width:1px;height:18px;background:#4a4a4a"></div>
<svg style="left:1800px;top:1022px" width="13" height="14" viewBox="0 0 13 14"><rect width="13" height="14" rx="1.2" fill="#c4c4c4"/><path d="M6.5 2.6 C8.2 2.6 8.8 3.8 8.8 5 C8.8 6.2 8.2 7 7.8 7.4 V8.2 C9.8 8.6 10.8 9.4 10.8 11.4 H2.2 C2.2 9.4 3.2 8.6 5.2 8.2 V7.4 C4.8 7 4.2 6.2 4.2 5 C4.2 3.8 4.8 2.6 6.5 2.6Z" fill="#7c7c7c"/></svg>
<div class="b" style="left:1820px;top:1022.0px;height:14px;line-height:14px;color:#f2f2f2">Operator: Admin</div>
<svg style="left:334px;top:158.5px" width="15" height="16" viewBox="0 0 14 14"><path d="M0.8 7 L7 1 L13.2 7" fill="none" stroke="#3a78c8" stroke-width="1.8"/><path d="M2.6 7 L7 2.8 L11.4 7 V13 H2.6Z" fill="#eef3fb" stroke="#3a78c8" stroke-width="0.9"/><rect x="4.8" y="6.8" width="4.4" height="4" fill="#5b95dc" stroke="#2b62ab" stroke-width="0.7"/><circle cx="11" cy="12.6" r="1.6" fill="#6cc04a"/></svg>
<div style="left:352px;top:160.0px;height:14px;line-height:14px;color:#f0f0f0">Start page</div>
<svg style="left:417px;top:163px" width="9" height="9" viewBox="0 0 9 9"><path d="M1 1L8 8M8 1L1 8" stroke="#d8d8d8" stroke-width="1.5"/></svg>
<div style="left:433px;top:155px;width:177px;height:25px;background:#444"></div>
<svg style="left:445px;top:161px" width="15" height="12" viewBox="0 0 15 12"><path d="M5 2.5 L7.5 0.5 L10 2.5Z" fill="#7fb2e6"/><rect x="0" y="2.5" width="15" height="8.5" fill="#fbfbfb"/><circle cx="4" cy="5.6" r="1.5" fill="#f0a830"/><path d="M1.5 9.6 C1.5 7.6 6.5 7.6 6.5 9.6Z" fill="#f0a830"/><path d="M8.5 5.5H13M8.5 7.5H13" stroke="#d0d0d0" stroke-width="0.9"/></svg>
<div style="left:464px;top:160.0px;height:14px;line-height:14px;color:#f4f4f4">[002]: Gerstner Herbert</div>
<svg style="left:592px;top:163px" width="9" height="9" viewBox="0 0 9 9"><path d="M1 1L8 8M8 1L1 8" stroke="#f4f4f4" stroke-width="1.7"/></svg>
<svg style="left:1904px;top:162px" width="9" height="5" viewBox="0 0 9 5"><path d="M0 0H9L4.5 5Z" fill="#6cb2ff"/></svg>
<div style="left:322px;top:180px;width:1596px;height:836px;border:1px solid #444;background:#6a6a6a"></div>
<div style="left:322px;top:179px;width:1596px;height:1px;background:#444"></div>
<div style="left:325px;top:208px;width:1590px;height:805px;border:1px solid #444;"></div>
<div style="left:336px;top:191.0px;height:14px;line-height:14px;color:#f0f0f0">Details</div>
<div style="left:379px;top:187px;width:85px;height:22px;background:#6a6a6a;border:1px solid #444;border-bottom:none"></div>
<div style="left:390px;top:191.0px;height:14px;line-height:14px;color:#f0f0f0">Work history</div>
<div style="left:473px;top:191.0px;height:14px;line-height:14px;color:#f0f0f0">Leave entitlements</div>
<div style="left:586px;top:191.0px;height:14px;line-height:14px;color:#f0f0f0">Work calendar</div>
<div style="left:338px;top:222.0px;height:16px;line-height:16px;color:#f0f0f0;font-size:12px;letter-spacing:-0.36px">Calendar: Weekdays 7:00 - 15:00</div>
<div style="left:514px;top:219px;width:1px;height:22px;background:#444"></div>
<svg style="left:526px;top:224px" width="16" height="13" viewBox="0 0 16 13"><path d="M0.6 1 H12.8 L9.4 7 V12 H6.8 V7Z" fill="#f4f4f4"/><path d="M3 1H12.8L9.4 7V12H8.4V6.4Z" fill="#c8c8c8" opacity=".55"/><path d="M14.4 1.4 L9.9 7" stroke="#111" stroke-width="1.3"/><path d="M9.6 8.6 V12 H7.6Z" fill="#0a0a0a"/></svg>
<div style="left:545px;top:222.0px;height:16px;line-height:16px;color:#f0f0f0;font-size:12px;letter-spacing:-0.38px">Date range: January 2020</div>
<svg style="left:677px;top:228px" width="6" height="4" viewBox="0 0 6 4"><path d="M0 0H6L3 3.4Z" fill="#f0f0f0"/></svg>
<div style="left:332px;top:247px;width:1272px;height:747px;border:1px solid #444;"></div>
<div style="left:335px;top:273px;width:1266px;height:718px;border:1px solid #444;"></div>
<div style="left:335px;top:252px;width:85px;height:22px;background:#6a6a6a;border:1px solid #444;border-bottom:none"></div>
<div style="left:346px;top:256.0px;height:14px;line-height:14px;color:#f0f0f0">Attendances</div>
<div style="left:429px;top:256.0px;height:14px;line-height:14px;color:#f0f0f0">Event log</div>
<div style="left:341px;top:302px;width:1254px;height:451px;border:1px solid #444;"></div>
<div style="left:352px;top:285.0px;height:14px;line-height:14px;color:#f0f0f0">Day list</div>
<div style="left:398px;top:281px;width:82px;height:22px;background:#6a6a6a;border:1px solid #444;border-bottom:none"></div>
<div style="left:409px;top:285.0px;height:14px;line-height:14px;color:#f0f0f0">Days details</div>
<div style="left:489px;top:285.0px;height:14px;line-height:14px;color:#f0f0f0">Total times</div>
<div style="left:563px;top:285.0px;height:14px;line-height:14px;color:#f0f0f0"><span style="letter-spacing:-0.28px">Discrepancies</span></div>
<div style="left:348px;top:306px;width:1px;height:20px;background:#444"></div>
<div style="left:350px;top:306px;width:1px;height:20px;background:#444"></div>
<svg style="left:360px;top:308px" width="16" height="16" viewBox="0 0 16 16"><defs><linearGradient id="ga" x1="0" y1="0" x2="0" y2="1"><stop offset="0" stop-color="#9ccdf8"/><stop offset="1" stop-color="#3a84dc"/></linearGradient></defs><circle cx="8" cy="8" r="7.3" fill="url(#ga)" stroke="#2c62b4" stroke-width="1.2"/><path d="M6.4 3.6H9.6V6.4H12.4V9.6H9.6V12.4H6.4V9.6H3.6V6.4H6.4Z" fill="#fff" stroke="#3a78cc" stroke-width="0.8"/></svg>
<div class="s12" style="left:380px;top:308.0px;height:16px;line-height:16px;color:#f4f4f4">Add</div>
<svg style="left:418px;top:308px" width="15" height="17" viewBox="0 0 15 17"><path d="M0.5 0.5H11V8L6 13.5H0.5Z" fill="#b6b6b6"/><path d="M12.4 6.2 L5.6 13.4 L4.4 16.2 L7.4 15.2 L14.2 8Z" fill="#a6a6a6"/><path d="M12.4 6.2 L14.2 8" stroke="#c4c4c4" stroke-width="0.8"/></svg>
<div class="s12 dis" style="left:436px;top:308.0px;height:16px;line-height:16px;">Edit</div>
<svg style="left:471px;top:310px" width="13" height="13" viewBox="0 0 13 13"><path d="M2 2L11 11M11 2L2 11" stroke="#b4b4b4" stroke-width="3.3" stroke-linecap="round"/></svg>
<div class="s12 dis" style="left:490px;top:308.0px;height:16px;line-height:16px;">Delete</div>
<div style="left:533px;top:305px;width:1px;height:22px;background:#444"></div>
<svg style="left:544px;top:308px" width="16" height="16" viewBox="0 0 16 16"><rect x="0.5" y="0.5" width="14" height="11.5" fill="#b2b2b2" stroke="#a2a2a2"/><rect x="0.5" y="0.5" width="14" height="2.4" fill="#a0a0a0"/><path d="M2.5 5.5H8M2.5 8.5H6" stroke="#8c8c8c" stroke-width="1.2"/><path d="M13.6 5.6 L8 12 L6.8 15 L9.8 13.8 L15.4 7.4Z" fill="#c0c0c0" stroke="#9a9a9a" stroke-width="0.6"/></svg>
<div class="s12 dis" style="left:564px;top:308.0px;height:16px;line-height:16px;">Accept</div>
<svg style="left:615px;top:308px" width="16" height="16" viewBox="0 0 16 16"><circle cx="8" cy="8" r="7.7" fill="#a6a6a6"/><rect x="3.8" y="6.9" width="8.4" height="2.4" rx="0.6" fill="#dadada"/></svg>
<div class="s12 dis" style="left:634px;top:308.0px;height:16px;line-height:16px;">Reject</div>
<div style="left:677px;top:305px;width:1px;height:22px;background:#444"></div>
<svg style="left:690px;top:309px" width="11" height="14" viewBox="0 0 11 14"><rect x="0.5" y="1.6" width="10" height="12" fill="#f09a28" stroke="#c87410"/><rect x="2.2" y="4" width="6.6" height="8.4" fill="#fdfdfd"/><rect x="3.2" y="0.4" width="4.6" height="3" rx="0.8" fill="#e8e8e8" stroke="#777" stroke-width="0.7"/></svg>
<div class="s12" style="left:707px;top:308.0px;height:16px;line-height:16px;color:#f4f4f4">Report</div>
<svg style="left:757px;top:309px" width="16" height="13" viewBox="0 0 16 13"><path d="M0.6 1 H12.8 L9.4 7 V12 H6.8 V7Z" fill="#f4f4f4"/><path d="M3 1H12.8L9.4 7V12H8.4V6.4Z" fill="#c8c8c8" opacity=".55"/><path d="M14.4 1.4 L9.9 7" stroke="#111" stroke-width="1.3"/><path d="M9.6 8.6 V12 H7.6Z" fill="#0a0a0a"/></svg>
<div class="s12" style="left:777px;top:308.0px;height:16px;line-height:16px;color:#f4f4f4">Show/Hide events under definition</div>
<svg style="left:1584px;top:313px" width="8" height="7" viewBox="0 0 8 7"><path d="M0.8 1L4 4.6L7.2 1" fill="none" stroke="#fff" stroke-width="1.8"/></svg>
<div style="left:344px;top:331px;width:1248px;height:419px;background:#d4d4d4;border:1px solid #3f3f3f"></div>
<div style="left:345px;top:332px;width:1246px;height:20px;background:#b2b2b2;border-bottom:1px solid #3f3f3f"></div>
<div style="left:444px;top:332px;width:1px;height:19px;background:#3f3f3f"></div>
<div style="left:349px;top:334.0px;height:14px;line-height:14px;">Work date</div>
<div style="left:494px;top:332px;width:1px;height:19px;background:#3f3f3f"></div>
<div style="left:445px;top:334.0px;height:14px;line-height:14px;width:49px;text-align:center;">Color</div>
<div style="left:866px;top:332px;width:1px;height:19px;background:#3f3f3f"></div>
<div style="left:499px;top:334.0px;height:14px;line-height:14px;">Attendance type name</div>
<div style="left:959px;top:332px;width:1px;height:19px;background:#3f3f3f"></div>
<div style="left:871px;top:334.0px;height:14px;line-height:14px;">Event</div>
<div style="left:1137px;top:332px;width:1px;height:19px;background:#3f3f3f"></div>
<div style="left:964px;top:334.0px;height:14px;line-height:14px;">Attendance terminal</div>
<div style="left:1343px;top:332px;width:1px;height:19px;background:#3f3f3f"></div>
<div style="left:1142px;top:334.0px;height:14px;line-height:14px;">Comment</div>
<div style="left:1423px;top:332px;width:1px;height:19px;background:#3f3f3f"></div>
<div style="left:1348px;top:334.0px;height:14px;line-height:14px;">Total time</div>
<div style="left:1523px;top:332px;width:1px;height:19px;background:#3f3f3f"></div>
<div style="left:1428px;top:334.0px;height:14px;line-height:14px;">Calculated time</div>
<div style="left:1574px;top:332px;width:1px;height:19px;background:#3f3f3f"></div>
<div style="left:1528px;top:334.0px;height:14px;line-height:14px;">Is added</div>
<div style="left:1579px;top:334.0px;height:14px;line-height:14px;"></div>
<div style="left:345px;top:352px;width:1229px;height:20px;background:#cbcbcb"></div>
<div style="left:345px;top:372px;width:1229px;height:1px;background:#b6b6b6"></div>
<div class="b" style="left:345px;top:355.0px;height:14px;line-height:14px;width:96px;text-align:right;letter-spacing:0.68px">1/2/2020</div>
<div style="left:462px;top:354px;width:16px;height:16px;background:#9acd32"></div>
<div class="b" style="left:499px;top:355.0px;height:14px;line-height:14px;">Fixed working day 8-16 [01-02 05:00 - 01-02 19:00]</div>
<div class="b" style="left:1240px;top:355.0px;height:14px;line-height:14px;width:100px;text-align:right;">Total:</div>
<div class="b" style="left:1344px;top:355.0px;height:14px;line-height:14px;width:76px;text-align:right;">08:07</div>
<div class="b" style="left:1424px;top:355.0px;height:14px;line-height:14px;width:96px;text-align:right;">07:02</div>
<div style="left:1543px;top:355px;width:13px;height:13px;background:#b8b8b8;border:1px solid #4a4a4a"></div>
<div style="left:345px;top:373px;width:1229px;height:20px;background:#d4d4d4"></div>
<div style="left:1344px;top:373px;width:79px;height:20px;background:#ffffc0"></div>
<div style="left:1424px;top:373px;width:99px;height:20px;background:#ffffc0"></div>
<div style="left:345px;top:393px;width:1229px;height:1px;background:#b6b6b6"></div>
<div style="left:345px;top:376.0px;height:14px;line-height:14px;width:96px;text-align:right;">6:55 AM</div>
<div style="left:462px;top:375px;width:16px;height:16px;background:#c4d2e0"></div>
<div style="left:499px;top:376.0px;height:14px;line-height:14px;">Work</div>
<div style="left:871px;top:376.0px;height:14px;line-height:14px;">T&amp;A - Entry</div>
<div style="left:964px;top:376.0px;height:14px;line-height:14px;">Office entry</div>
<div style="left:1344px;top:376.0px;height:14px;line-height:14px;width:76px;text-align:right;">05:05</div>
<div class="b" style="left:1424px;top:376.0px;height:14px;line-height:14px;width:96px;text-align:right;">04:00</div>
<div style="left:1543px;top:376px;width:13px;height:13px;background:#b8b8b8;border:1px solid #4a4a4a"></div>
<div style="left:345px;top:394px;width:1229px;height:20px;background:#d4d4d4"></div>
<div style="left:1344px;top:394px;width:79px;height:20px;background:#ffffc0"></div>
<div style="left:1424px;top:394px;width:99px;height:20px;background:#ffffc0"></div>
<div style="left:345px;top:414px;width:1229px;height:1px;background:#b6b6b6"></div>
<div style="left:345px;top:397.0px;height:14px;line-height:14px;width:96px;text-align:right;">12:00 PM</div>
<div style="left:462px;top:396px;width:16px;height:16px;background:#c4d2e0"></div>
<div style="left:499px;top:397.0px;height:14px;line-height:14px;">Work</div>
<div style="left:871px;top:397.0px;height:14px;line-height:14px;">T&amp;A - Entry</div>
<div style="left:964px;top:397.0px;height:14px;line-height:14px;">Office entry</div>
<div style="left:1344px;top:397.0px;height:14px;line-height:14px;width:76px;text-align:right;">03:02</div>
<div class="b" style="left:1424px;top:397.0px;height:14px;line-height:14px;width:96px;text-align:right;">03:02</div>
<div style="left:1543px;top:397px;width:13px;height:13px;background:#b8b8b8;border:1px solid #4a4a4a"></div>
<div style="left:345px;top:415px;width:1229px;height:20px;background:#d4d4d4"></div>
<div style="left:1344px;top:415px;width:79px;height:20px;background:#ffffc0"></div>
<div style="left:1424px;top:415px;width:99px;height:20px;background:#ffffc0"></div>
<div style="left:345px;top:435px;width:1229px;height:1px;background:#b6b6b6"></div>
<div style="left:345px;top:418.0px;height:14px;line-height:14px;width:96px;text-align:right;">3:02 PM</div>
<div style="left:462px;top:417px;width:16px;height:16px;background:#fffafa"></div>
<div style="left:499px;top:418.0px;height:14px;line-height:14px;">Outside work</div>
<div style="left:871px;top:418.0px;height:14px;line-height:14px;">T&amp;A - Leave</div>
<div style="left:964px;top:418.0px;height:14px;line-height:14px;">Office exit</div>
<div style="left:1344px;top:418.0px;height:14px;line-height:14px;width:76px;text-align:right;">00:00</div>
<div class="b" style="left:1424px;top:418.0px;height:14px;line-height:14px;width:96px;text-align:right;">00:00</div>
<div style="left:1543px;top:418px;width:13px;height:13px;background:#b8b8b8;border:1px solid #4a4a4a"></div>
<div style="left:345px;top:436px;width:1229px;height:20px;background:#f0f8ff"></div>
<div style="left:1344px;top:436px;width:79px;height:20px;background:linear-gradient(90deg,#f0f8ff 0%,#f4f9e8 40%,#ffffc2 100%)"></div>
<div style="left:1424px;top:436px;width:99px;height:20px;background:linear-gradient(90deg,#f0f8ff 0%,#f4f9e8 40%,#ffffc2 100%)"></div>
<div style="left:345px;top:456px;width:1229px;height:1px;background:#b6b6b6"></div>
<div class="b" style="left:345px;top:439.0px;height:14px;line-height:14px;width:96px;text-align:right;letter-spacing:0.68px">1/3/2020</div>
<div style="left:462px;top:438px;width:16px;height:16px;background:#9acd32"></div>
<div class="b" style="left:499px;top:439.0px;height:14px;line-height:14px;">Fixed working day 8-16 [01-03 05:00 - 01-03 19:00]</div>
<div class="b" style="left:1240px;top:439.0px;height:14px;line-height:14px;width:100px;text-align:right;">Total:</div>
<div class="b" style="left:1344px;top:439.0px;height:14px;line-height:14px;width:76px;text-align:right;">08:05</div>
<div class="b" style="left:1424px;top:439.0px;height:14px;line-height:14px;width:96px;text-align:right;">07:02</div>
<div style="left:1543px;top:439px;width:13px;height:13px;background:#b8b8b8;border:1px solid #4a4a4a"></div>
<div style="left:345px;top:457px;width:1229px;height:20px;background:#d4d4d4"></div>
<div style="left:1344px;top:457px;width:79px;height:20px;background:#ffffc0"></div>
<div style="left:1424px;top:457px;width:99px;height:20px;background:#ffffc0"></div>
<div style="left:345px;top:477px;width:1229px;height:1px;background:#b6b6b6"></div>
<div style="left:345px;top:460.0px;height:14px;line-height:14px;width:96px;text-align:right;">6:57 AM</div>
<div style="left:462px;top:459px;width:16px;height:16px;background:#c4d2e0"></div>
<div style="left:499px;top:460.0px;height:14px;line-height:14px;">Work</div>
<div style="left:871px;top:460.0px;height:14px;line-height:14px;">T&amp;A - Entry</div>
<div style="left:964px;top:460.0px;height:14px;line-height:14px;">Office entry</div>
<div style="left:1344px;top:460.0px;height:14px;line-height:14px;width:76px;text-align:right;">08:05</div>
<div class="b" style="left:1424px;top:460.0px;height:14px;line-height:14px;width:96px;text-align:right;">07:02</div>
<div style="left:1543px;top:460px;width:13px;height:13px;background:#b8b8b8;border:1px solid #4a4a4a"></div>
<div style="left:345px;top:478px;width:1229px;height:20px;background:#d4d4d4"></div>
<div style="left:1344px;top:478px;width:79px;height:20px;background:#ffffc0"></div>
<div style="left:1424px;top:478px;width:99px;height:20px;background:#ffffc0"></div>
<div style="left:345px;top:498px;width:1229px;height:1px;background:#b6b6b6"></div>
<div style="left:345px;top:481.0px;height:14px;line-height:14px;width:96px;text-align:right;">3:02 PM</div>
<div style="left:462px;top:480px;width:16px;height:16px;background:#fffafa"></div>
<div style="left:499px;top:481.0px;height:14px;line-height:14px;">Outside work</div>
<div style="left:871px;top:481.0px;height:14px;line-height:14px;">T&amp;A - Leave</div>
<div style="left:964px;top:481.0px;height:14px;line-height:14px;">Office exit</div>
<div style="left:1344px;top:481.0px;height:14px;line-height:14px;width:76px;text-align:right;">00:00</div>
<div class="b" style="left:1424px;top:481.0px;height:14px;line-height:14px;width:96px;text-align:right;">00:00</div>
<div style="left:1543px;top:481px;width:13px;height:13px;background:#b8b8b8;border:1px solid #4a4a4a"></div>
<div style="left:345px;top:499px;width:1229px;height:20px;background:#f0f8ff"></div>
<div style="left:1344px;top:499px;width:79px;height:20px;background:linear-gradient(90deg,#f0f8ff 0%,#f4f9e8 40%,#ffffc2 100%)"></div>
<div style="left:1424px;top:499px;width:99px;height:20px;background:linear-gradient(90deg,#f0f8ff 0%,#f4f9e8 40%,#ffffc2 100%)"></div>
<div style="left:345px;top:519px;width:1229px;height:1px;background:#b6b6b6"></div>
<div class="b" style="left:345px;top:502.0px;height:14px;line-height:14px;width:96px;text-align:right;letter-spacing:0.68px">1/4/2020</div>
<div style="left:462px;top:501px;width:16px;height:16px;background:#d2b48c"></div>
<div class="b" style="left:499px;top:502.0px;height:14px;line-height:14px;">Fixed working day 8-16 - additional [01-04 05:00 - 01-04 19:00]</div>
<div class="b" style="left:1240px;top:502.0px;height:14px;line-height:14px;width:100px;text-align:right;">Total:</div>
<div class="b" style="left:1344px;top:502.0px;height:14px;line-height:14px;width:76px;text-align:right;">08:00</div>
<div class="b" style="left:1424px;top:502.0px;height:14px;line-height:14px;width:96px;text-align:right;">08:00</div>
<div style="left:1543px;top:502px;width:13px;height:13px;background:#b8b8b8;border:1px solid #4a4a4a"></div>
<div style="left:345px;top:520px;width:1229px;height:20px;background:#d4d4d4"></div>
<div style="left:1344px;top:520px;width:79px;height:20px;background:#ffffc0"></div>
<div style="left:1424px;top:520px;width:99px;height:20px;background:#ffffc0"></div>
<div style="left:345px;top:540px;width:1229px;height:1px;background:#b6b6b6"></div>
<div style="left:345px;top:523.0px;height:14px;line-height:14px;width:96px;text-align:right;">8:00 AM</div>
<div style="left:462px;top:522px;width:16px;height:16px;background:#c4d2e0"></div>
<div style="left:499px;top:523.0px;height:14px;line-height:14px;">Work</div>
<div style="left:871px;top:523.0px;height:14px;line-height:14px;">T&amp;A - Entry</div>
<div style="left:964px;top:523.0px;height:14px;line-height:14px;">Office entry</div>
<div style="left:1344px;top:523.0px;height:14px;line-height:14px;width:76px;text-align:right;">08:00</div>
<div class="b" style="left:1424px;top:523.0px;height:14px;line-height:14px;width:96px;text-align:right;">08:00</div>
<div style="left:1543px;top:523px;width:13px;height:13px;background:#b8b8b8;border:1px solid #4a4a4a"></div>
<div style="left:345px;top:541px;width:1229px;height:20px;background:#d4d4d4"></div>
<div style="left:1344px;top:541px;width:79px;height:20px;background:#ffffc0"></div>
<div style="left:1424px;top:541px;width:99px;height:20px;background:#ffffc0"></div>
<div style="left:345px;top:561px;width:1229px;height:1px;background:#b6b6b6"></div>
<div style="left:345px;top:544.0px;height:14px;line-height:14px;width:96px;text-align:right;">4:00 PM</div>
<div style="left:462px;top:543px;width:16px;height:16px;background:#fffafa"></div>
<div style="left:499px;top:544.0px;height:14px;line-height:14px;">Outside work</div>
<div style="left:871px;top:544.0px;height:14px;line-height:14px;">T&amp;A - Leave</div>
<div style="left:964px;top:544.0px;height:14px;line-height:14px;">Office exit</div>
<div style="left:1344px;top:544.0px;height:14px;line-height:14px;width:76px;text-align:right;">00:00</div>
<div class="b" style="left:1424px;top:544.0px;height:14px;line-height:14px;width:96px;text-align:right;">00:00</div>
<div style="left:1543px;top:544px;width:13px;height:13px;background:#b8b8b8;border:1px solid #4a4a4a"></div>
<div style="left:345px;top:562px;width:1229px;height:20px;background:#f0f8ff"></div>
<div style="left:1344px;top:562px;width:79px;height:20px;background:linear-gradient(90deg,#f0f8ff 0%,#f4f9e8 40%,#ffffc2 100%)"></div>
<div style="left:1424px;top:562px;width:99px;height:20px;background:linear-gradient(90deg,#f0f8ff 0%,#f4f9e8 40%,#ffffc2 100%)"></div>
<div style="left:345px;top:582px;width:1229px;height:1px;background:#b6b6b6"></div>
<div class="b" style="left:345px;top:565.0px;height:14px;line-height:14px;width:96px;text-align:right;letter-spacing:0.68px">1/7/2020</div>
<div style="left:462px;top:564px;width:16px;height:16px;background:#9acd32"></div>
<div class="b" style="left:499px;top:565.0px;height:14px;line-height:14px;">Fixed working day 8-16 [01-07 05:00 - 01-07 19:00]</div>
<div class="b" style="left:1240px;top:565.0px;height:14px;line-height:14px;width:100px;text-align:right;">Total:</div>
<div class="b" style="left:1344px;top:565.0px;height:14px;line-height:14px;width:76px;text-align:right;">07:57</div>
<div class="b" style="left:1424px;top:565.0px;height:14px;line-height:14px;width:96px;text-align:right;">07:02</div>
<div style="left:1543px;top:565px;width:13px;height:13px;background:#b8b8b8;border:1px solid #4a4a4a"></div>
<div style="left:345px;top:583px;width:1229px;height:20px;background:#d4d4d4"></div>
<div style="left:1344px;top:583px;width:79px;height:20px;background:#ffffc0"></div>
<div style="left:1424px;top:583px;width:99px;height:20px;background:#ffffc0"></div>
<div style="left:345px;top:603px;width:1229px;height:1px;background:#b6b6b6"></div>
<div style="left:345px;top:586.0px;height:14px;line-height:14px;width:96px;text-align:right;">7:05 AM</div>
<div style="left:462px;top:585px;width:16px;height:16px;background:#c4d2e0"></div>
<div style="left:499px;top:586.0px;height:14px;line-height:14px;">Work</div>
<div style="left:871px;top:586.0px;height:14px;line-height:14px;">T&amp;A - Entry</div>
<div style="left:964px;top:586.0px;height:14px;line-height:14px;">Office entry</div>
<div style="left:1344px;top:586.0px;height:14px;line-height:14px;width:76px;text-align:right;">07:57</div>
<div class="b" style="left:1424px;top:586.0px;height:14px;line-height:14px;width:96px;text-align:right;">07:02</div>
<div style="left:1543px;top:586px;width:13px;height:13px;background:#b8b8b8;border:1px solid #4a4a4a"></div>
<div style="left:345px;top:604px;width:1229px;height:20px;background:#d4d4d4"></div>
<div style="left:1344px;top:604px;width:79px;height:20px;background:#ffffc0"></div>
<div style="left:1424px;top:604px;width:99px;height:20px;background:#ffffc0"></div>
<div style="left:345px;top:624px;width:1229px;height:1px;background:#b6b6b6"></div>
<div style="left:345px;top:607.0px;height:14px;line-height:14px;width:96px;text-align:right;">3:02 PM</div>
<div style="left:462px;top:606px;width:16px;height:16px;background:#fffafa"></div>
<div style="left:499px;top:607.0px;height:14px;line-height:14px;">Outside work</div>
<div style="left:871px;top:607.0px;height:14px;line-height:14px;">T&amp;A - Leave</div>
<div style="left:964px;top:607.0px;height:14px;line-height:14px;">Office exit</div>
<div style="left:1344px;top:607.0px;height:14px;line-height:14px;width:76px;text-align:right;">00:00</div>
<div class="b" style="left:1424px;top:607.0px;height:14px;line-height:14px;width:96px;text-align:right;">00:00</div>
<div style="left:1543px;top:607px;width:13px;height:13px;background:#b8b8b8;border:1px solid #4a4a4a"></div>
<div style="left:345px;top:625px;width:1229px;height:20px;background:#f0f8ff"></div>
<div style="left:1344px;top:625px;width:79px;height:20px;background:linear-gradient(90deg,#f0f8ff 0%,#f4f9e8 40%,#ffffc2 100%)"></div>
<div style="left:1424px;top:625px;width:99px;height:20px;background:linear-gradient(90deg,#f0f8ff 0%,#f4f9e8 40%,#ffffc2 100%)"></div>
<div style="left:345px;top:645px;width:1229px;height:1px;background:#b6b6b6"></div>
<div class="b" style="left:345px;top:628.0px;height:14px;line-height:14px;width:96px;text-align:right;letter-spacing:0.68px">1/8/2020</div>
<div style="left:462px;top:627px;width:16px;height:16px;background:#9acd32"></div>
<div class="b" style="left:499px;top:628.0px;height:14px;line-height:14px;">Fixed working day 8-16 [01-08 05:00 - 01-08 19:00]</div>
<div class="b" style="left:1240px;top:628.0px;height:14px;line-height:14px;width:100px;text-align:right;">Total:</div>
<div class="b" style="left:1344px;top:628.0px;height:14px;line-height:14px;width:76px;text-align:right;">08:00</div>
<div class="b" style="left:1424px;top:628.0px;height:14px;line-height:14px;width:96px;text-align:right;">07:00</div>
<div style="left:1543px;top:628px;width:13px;height:13px;background:#b8b8b8;border:1px solid #4a4a4a"></div>
<div style="left:345px;top:646px;width:1229px;height:20px;background:#d4d4d4"></div>
<div style="left:1344px;top:646px;width:79px;height:20px;background:#ffffc0"></div>
<div style="left:1424px;top:646px;width:99px;height:20px;background:#ffffc0"></div>
<div style="left:345px;top:666px;width:1229px;height:1px;background:#b6b6b6"></div>
<div style="left:345px;top:649.0px;height:14px;line-height:14px;width:96px;text-align:right;">7:00 AM</div>
<div style="left:462px;top:648px;width:16px;height:16px;background:#c4d2e0"></div>
<div style="left:499px;top:649.0px;height:14px;line-height:14px;">Work</div>
<div style="left:871px;top:649.0px;height:14px;line-height:14px;">T&amp;A - Entry</div>
<div style="left:964px;top:649.0px;height:14px;line-height:14px;">Office entry</div>
<div style="left:1344px;top:649.0px;height:14px;line-height:14px;width:76px;text-align:right;">05:00</div>
<div class="b" style="left:1424px;top:649.0px;height:14px;line-height:14px;width:96px;text-align:right;">04:00</div>
<div style="left:1543px;top:649px;width:13px;height:13px;background:#b8b8b8;border:1px solid #4a4a4a"></div>
<div style="left:345px;top:667px;width:1229px;height:20px;background:#d4d4d4"></div>
<div style="left:1344px;top:667px;width:79px;height:20px;background:#ffffc0"></div>
<div style="left:1424px;top:667px;width:99px;height:20px;background:#ffffc0"></div>
<div style="left:345px;top:687px;width:1229px;height:1px;background:#b6b6b6"></div>
<div style="left:345px;top:670.0px;height:14px;line-height:14px;width:96px;text-align:right;">12:00 PM</div>
<div style="left:462px;top:669px;width:16px;height:16px;background:#ba55d3"></div>
<div style="left:499px;top:670.0px;height:14px;line-height:14px;">Exit on duty</div>
<div style="left:871px;top:670.0px;height:14px;line-height:14px;">Exit on duty</div>
<div style="left:964px;top:670.0px;height:14px;line-height:14px;">Office exit</div>
<div style="left:1344px;top:670.0px;height:14px;line-height:14px;width:76px;text-align:right;">02:00</div>
<div class="b" style="left:1424px;top:670.0px;height:14px;line-height:14px;width:96px;text-align:right;">02:00</div>
<div style="left:1543px;top:670px;width:13px;height:13px;background:#b8b8b8;border:1px solid #4a4a4a"></div>
<div style="left:345px;top:688px;width:1229px;height:20px;background:#d4d4d4"></div>
<div style="left:1344px;top:688px;width:79px;height:20px;background:#ffffc0"></div>
<div style="left:1424px;top:688px;width:99px;height:20px;background:#ffffc0"></div>
<div style="left:345px;top:708px;width:1229px;height:1px;background:#b6b6b6"></div>
<div style="left:345px;top:691.0px;height:14px;line-height:14px;width:96px;text-align:right;">2:00 PM</div>
<div style="left:462px;top:690px;width:16px;height:16px;background:#c4d2e0"></div>
<div style="left:499px;top:691.0px;height:14px;line-height:14px;">Work</div>
<div style="left:871px;top:691.0px;height:14px;line-height:14px;">T&amp;A - Entry</div>
<div style="left:964px;top:691.0px;height:14px;line-height:14px;">Office entry</div>
<div style="left:1344px;top:691.0px;height:14px;line-height:14px;width:76px;text-align:right;">01:00</div>
<div class="b" style="left:1424px;top:691.0px;height:14px;line-height:14px;width:96px;text-align:right;">01:00</div>
<div style="left:1543px;top:691px;width:13px;height:13px;background:#b8b8b8;border:1px solid #4a4a4a"></div>
<div style="left:345px;top:709px;width:1229px;height:20px;background:#d4d4d4"></div>
<div style="left:1344px;top:709px;width:79px;height:20px;background:#ffffc0"></div>
<div style="left:1424px;top:709px;width:99px;height:20px;background:#ffffc0"></div>
<div style="left:345px;top:729px;width:1229px;height:1px;background:#b6b6b6"></div>
<div style="left:345px;top:712.0px;height:14px;line-height:14px;width:96px;text-align:right;">3:00 PM</div>
<div style="left:462px;top:711px;width:16px;height:16px;background:#fffafa"></div>
<div style="left:499px;top:712.0px;height:14px;line-height:14px;">Outside work</div>
<div style="left:871px;top:712.0px;height:14px;line-height:14px;">T&amp;A - Leave</div>
<div style="left:964px;top:712.0px;height:14px;line-height:14px;">Office exit</div>
<div style="left:1344px;top:712.0px;height:14px;line-height:14px;width:76px;text-align:right;">00:00</div>
<div class="b" style="left:1424px;top:712.0px;height:14px;line-height:14px;width:96px;text-align:right;">00:00</div>
<div style="left:1543px;top:712px;width:13px;height:13px;background:#b8b8b8;border:1px solid #4a4a4a"></div>
<div style="left:345px;top:730px;width:1229px;height:19px;background:#f0f8ff"></div>
<div style="left:1344px;top:730px;width:79px;height:19px;background:linear-gradient(90deg,#f0f8ff 0%,#f4f9e8 40%,#ffffc2 100%)"></div>
<div style="left:1424px;top:730px;width:99px;height:19px;background:linear-gradient(90deg,#f0f8ff 0%,#f4f9e8 40%,#ffffc2 100%)"></div>
<div class="b" style="left:345px;top:733.0px;height:14px;line-height:14px;width:96px;text-align:right;letter-spacing:0.68px">1/9/2020</div>
<div style="left:462px;top:732px;width:16px;height:16px;background:#9acd32"></div>
<div class="b" style="left:499px;top:733.0px;height:14px;line-height:14px;">Fixed working day 8-16 [01-09 05:00 - 01-09 19:00]</div>
<div class="b" style="left:1240px;top:733.0px;height:14px;line-height:14px;width:100px;text-align:right;">Total:</div>
<div class="b" style="left:1344px;top:733.0px;height:14px;line-height:14px;width:76px;text-align:right;">00:00</div>
<div class="b" style="left:1424px;top:733.0px;height:14px;line-height:14px;width:96px;text-align:right;">00:00</div>
<div style="left:1543px;top:733px;width:13px;height:13px;background:#b8b8b8;border:1px solid #4a4a4a"></div>
<div style="left:444px;top:352px;width:1px;height:397px;background:#b0b0b0"></div>
<div style="left:494px;top:352px;width:1px;height:397px;background:#b0b0b0"></div>
<div style="left:866px;top:352px;width:1px;height:397px;background:#b0b0b0"></div>
<div style="left:959px;top:352px;width:1px;height:397px;background:#b0b0b0"></div>
<div style="left:1137px;top:352px;width:1px;height:397px;background:#b0b0b0"></div>
<div style="left:1343px;top:352px;width:1px;height:397px;background:#b0b0b0"></div>
<div style="left:1423px;top:352px;width:1px;height:397px;background:#b0b0b0"></div>
<div style="left:1523px;top:352px;width:1px;height:397px;background:#b0b0b0"></div>
<div style="left:1574px;top:352px;width:17px;height:397px;background:#b4b4b4"></div>
<div style="left:1574px;top:352px;width:17px;height:17px;background:#c4c4c4"></div>
<div style="left:1574px;top:369px;width:17px;height:92px;background:#9b9b9b"></div>
<svg style="left:1578px;top:357px" width="9" height="6" viewBox="0 0 9 6"><path d="M1 5L4.5 1.4L8 5" fill="none" stroke="#444" stroke-width="2"/></svg>
<svg style="left:1578px;top:737px" width="9" height="6" viewBox="0 0 9 6"><path d="M1 1L4.5 4.6L8 1" fill="none" stroke="#444" stroke-width="2"/></svg>
<div style="left:1611px;top:613px;width:2px;height:2px;background:#3c3c3c"></div>
<div style="left:1611px;top:617px;width:2px;height:2px;background:#3c3c3c"></div>
<div style="left:1611px;top:621px;width:2px;height:2px;background:#3c3c3c"></div>
<div style="left:1611px;top:625px;width:2px;height:2px;background:#3c3c3c"></div>
<div style="left:959px;top:758px;width:2px;height:2px;background:#626262"></div>
<div style="left:963px;top:758px;width:2px;height:2px;background:#626262"></div>
<div style="left:967px;top:758px;width:2px;height:2px;background:#626262"></div>
<div style="left:971px;top:758px;width:2px;height:2px;background:#626262"></div>
<div style="left:975px;top:758px;width:2px;height:2px;background:#626262"></div>
<div class="b" style="left:343px;top:767.0px;height:14px;line-height:14px;color:#f4f4f4;letter-spacing:0.08px">Total attendances time in period</div>
<div style="left:343px;top:783px;width:938px;height:200px;border:1px solid #3f3f3f"></div>
<div style="left:344px;top:784px;width:936px;height:167px;background:#d4d4d4"></div>
<div style="left:344px;top:951px;width:936px;height:1px;background:#3f3f3f"></div>
<div style="left:344px;top:784px;width:936px;height:20px;background:#b2b2b2;border-bottom:1px solid #3f3f3f"></div>
<div style="left:378px;top:784px;width:1px;height:19px;background:#3f3f3f"></div>
<div style="left:348px;top:786.0px;height:14px;line-height:14px;">Color</div>
<div style="left:428px;top:784px;width:1px;height:19px;background:#3f3f3f"></div>
<div style="left:383px;top:786.0px;height:14px;line-height:14px;">Code</div>
<div style="left:667px;top:784px;width:1px;height:19px;background:#3f3f3f"></div>
<div style="left:433px;top:786.0px;height:14px;line-height:14px;">Attendance type</div>
<div style="left:809px;top:784px;width:1px;height:19px;background:#3f3f3f"></div>
<div style="left:672px;top:786.0px;height:14px;line-height:14px;">Total time</div>
<div style="left:951px;top:784px;width:1px;height:19px;background:#3f3f3f"></div>
<div style="left:814px;top:786.0px;height:14px;line-height:14px;">Calculated work time</div>
<div style="left:1093px;top:784px;width:1px;height:19px;background:#3f3f3f"></div>
<div style="left:956px;top:786.0px;height:14px;line-height:14px;">Sundays and holidays</div>
<div style="left:1098px;top:786.0px;height:14px;line-height:14px;">Night hours</div>
<div style="left:344px;top:804px;width:936px;height:20px;background:#cbcbcb"></div>
<div style="left:344px;top:824px;width:936px;height:1px;background:#b6b6b6"></div>
<div style="left:353px;top:806px;width:16px;height:16px;background:#c4d2e0;border:1px solid #000"></div>
<div style="left:383px;top:807.0px;height:14px;line-height:14px;">PR</div>
<div style="left:433px;top:807.0px;height:14px;line-height:14px;">Work</div>
<div style="left:668px;top:807.0px;height:14px;line-height:14px;width:138px;text-align:right;">159:52</div>
<div class="b" style="left:810px;top:807.0px;height:14px;line-height:14px;width:138px;text-align:right;">140:15</div>
<div style="left:952px;top:807.0px;height:14px;line-height:14px;width:138px;text-align:right;">00:00</div>
<div style="left:1094px;top:807.0px;height:14px;line-height:14px;width:182px;text-align:right;">00:00</div>
<div style="left:344px;top:845px;width:936px;height:1px;background:#b6b6b6"></div>
<div style="left:353px;top:827px;width:16px;height:16px;background:#fffafa;border:1px solid #000"></div>
<div style="left:383px;top:828.0px;height:14px;line-height:14px;">PP</div>
<div style="left:433px;top:828.0px;height:14px;line-height:14px;">Outside work</div>
<div style="left:668px;top:828.0px;height:14px;line-height:14px;width:138px;text-align:right;">00:00</div>
<div class="b" style="left:810px;top:828.0px;height:14px;line-height:14px;width:138px;text-align:right;">00:00</div>
<div style="left:952px;top:828.0px;height:14px;line-height:14px;width:138px;text-align:right;">00:00</div>
<div style="left:1094px;top:828.0px;height:14px;line-height:14px;width:182px;text-align:right;">00:00</div>
<div style="left:344px;top:866px;width:936px;height:1px;background:#b6b6b6"></div>
<div style="left:353px;top:848px;width:16px;height:16px;background:#ba55d3;border:1px solid #000"></div>
<div style="left:383px;top:849.0px;height:14px;line-height:14px;">WS</div>
<div style="left:433px;top:849.0px;height:14px;line-height:14px;">Exit on duty</div>
<div style="left:668px;top:849.0px;height:14px;line-height:14px;width:138px;text-align:right;">02:00</div>
<div class="b" style="left:810px;top:849.0px;height:14px;line-height:14px;width:138px;text-align:right;">02:00</div>
<div style="left:952px;top:849.0px;height:14px;line-height:14px;width:138px;text-align:right;">00:00</div>
<div style="left:1094px;top:849.0px;height:14px;line-height:14px;width:182px;text-align:right;">00:00</div>
<div style="left:344px;top:887px;width:936px;height:1px;background:#b6b6b6"></div>
<div style="left:353px;top:869px;width:16px;height:16px;background:#ffebcd;border:1px solid #000"></div>
<div style="left:383px;top:870.0px;height:14px;line-height:14px;">WSZ</div>
<div style="left:433px;top:870.0px;height:14px;line-height:14px;">Exit on duty with automatic day close</div>
<div style="left:668px;top:870.0px;height:14px;line-height:14px;width:138px;text-align:right;">02:00</div>
<div class="b" style="left:810px;top:870.0px;height:14px;line-height:14px;width:138px;text-align:right;">02:00</div>
<div style="left:952px;top:870.0px;height:14px;line-height:14px;width:138px;text-align:right;">00:00</div>
<div style="left:1094px;top:870.0px;height:14px;line-height:14px;width:182px;text-align:right;">00:00</div>
<div style="left:344px;top:908px;width:936px;height:1px;background:#b6b6b6"></div>
<div style="left:353px;top:890px;width:16px;height:16px;background:#9acd32;border:1px solid #000"></div>
<div style="left:383px;top:891.0px;height:14px;line-height:14px;">UO</div>
<div style="left:433px;top:891.0px;height:14px;line-height:14px;">Occasional leave</div>
<div style="left:668px;top:891.0px;height:14px;line-height:14px;width:138px;text-align:right;">08:00</div>
<div class="b" style="left:810px;top:891.0px;height:14px;line-height:14px;width:138px;text-align:right;">08:00</div>
<div style="left:952px;top:891.0px;height:14px;line-height:14px;width:138px;text-align:right;">00:00</div>
<div style="left:1094px;top:891.0px;height:14px;line-height:14px;width:182px;text-align:right;">00:00</div>
<div style="left:378px;top:804px;width:1px;height:105px;background:#b0b0b0"></div>
<div style="left:428px;top:804px;width:1px;height:105px;background:#b0b0b0"></div>
<div style="left:667px;top:804px;width:1px;height:105px;background:#b0b0b0"></div>
<div style="left:809px;top:804px;width:1px;height:105px;background:#b0b0b0"></div>
<div style="left:951px;top:804px;width:1px;height:105px;background:#b0b0b0"></div>
<div style="left:1093px;top:804px;width:1px;height:105px;background:#b0b0b0"></div>
<div style="left:669px;top:955px;width:140px;height:24px;background:#d4d4d4;border:1px solid #444"></div>
<div class="b" style="left:669px;top:960.0px;height:14px;line-height:14px;width:136.5px;text-align:right;">171:52</div>
<div style="left:811px;top:955px;width:140px;height:24px;background:#d4d4d4;border:1px solid #444"></div>
<div class="b" style="left:811px;top:960.0px;height:14px;line-height:14px;width:136.5px;text-align:right;">152:15</div>
<div style="left:953px;top:955px;width:140px;height:24px;background:#d4d4d4;border:1px solid #444"></div>
<div class="b" style="left:953px;top:960.0px;height:14px;line-height:14px;width:136.5px;text-align:right;">00:00</div>
<div style="left:1095px;top:955px;width:185px;height:24px;background:#d4d4d4;border:1px solid #444"></div>
<div class="b" style="left:1095px;top:960.0px;height:14px;line-height:14px;width:181.5px;text-align:right;">00:00</div>
<div style="left:1286px;top:875px;width:2px;height:2px;background:#3c3c3c"></div>
<div style="left:1286px;top:879px;width:2px;height:2px;background:#3c3c3c"></div>
<div style="left:1286px;top:883px;width:2px;height:2px;background:#3c3c3c"></div>
<div style="left:1286px;top:887px;width:2px;height:2px;background:#3c3c3c"></div>
<div style="left:1295px;top:796px;width:296px;height:185px;border:1px solid #444;"></div>
<div class="b" style="left:1303px;top:788.0px;height:14px;line-height:14px;color:#f4f4f4;background:#6a6a6a">&nbsp;Work period totals&nbsp;</div>
<div class="b" style="left:1298px;top:808.0px;height:14px;line-height:14px;color:#f4f4f4">Calendar working hours</div>
<div class="b" style="left:1487px;top:808.0px;height:14px;line-height:14px;width:100px;text-align:right;color:#f4f4f4">168:00</div>
<div class="b" style="left:1298px;top:825.0px;height:14px;line-height:14px;color:#f4f4f4">Calculated work hours</div>
<div class="b" style="left:1487px;top:825.0px;height:14px;line-height:14px;width:100px;text-align:right;color:#f4f4f4">152:15</div>
<div class="b" style="left:1298px;top:842.0px;height:14px;line-height:14px;color:#f4f4f4">Balance</div>
<div class="b" style="left:1487px;top:842.0px;height:14px;line-height:14px;width:100px;text-align:right;color:#f4f4f4">-15:45</div>
<div style="left:1298px;top:859.0px;height:14px;line-height:14px;color:#f4f4f4">Late entries</div>
<div style="left:1487px;top:859.0px;height:14px;line-height:14px;width:100px;text-align:right;color:#f4f4f4">00:00</div>
<div style="left:1298px;top:876.0px;height:14px;line-height:14px;color:#f4f4f4">Early departures</div>
<div style="left:1487px;top:876.0px;height:14px;line-height:14px;width:100px;text-align:right;color:#f4f4f4">00:00</div>
<div style="left:1298px;top:893.0px;height:14px;line-height:14px;color:#f4f4f4">Sundays and holidays</div>
<div style="left:1487px;top:893.0px;height:14px;line-height:14px;width:100px;text-align:right;color:#f4f4f4">00:00</div>
<div style="left:1298px;top:910.0px;height:14px;line-height:14px;color:#f4f4f4">Night hours</div>
<div style="left:1487px;top:910.0px;height:14px;line-height:14px;width:100px;text-align:right;color:#f4f4f4">00:00</div>
<div style="left:1298px;top:927.0px;height:14px;line-height:14px;color:#f4f4f4">Overtimes</div>
<div style="left:1487px;top:927.0px;height:14px;line-height:14px;width:100px;text-align:right;color:#f4f4f4">00:00</div>
<div style="left:1620px;top:258px;width:288px;height:748px;border:1px solid #444;"></div>
<div class="b" style="left:1628px;top:250.0px;height:14px;line-height:14px;color:#f4f4f4;background:#6a6a6a">&nbsp;Calendar&nbsp;</div>
<div style="left:1625px;top:271px;width:52px;height:24px;background:#555"></div>
<svg style="left:1631px;top:275px" width="14" height="16" viewBox="0 0 14 16"><rect x="0" y="1.5" width="14" height="14.5" fill="#efefef"/><rect x="0" y="1.5" width="14" height="3.2" fill="#e8452c"/><rect x="2.4" y="0" width="1.5" height="3.6" fill="#f4f4f4"/><rect x="4.6" y="0" width="1.5" height="3.6" fill="#f4f4f4"/><rect x="8" y="0" width="1.5" height="3.6" fill="#f4f4f4"/><rect x="10.2" y="0" width="1.5" height="3.6" fill="#f4f4f4"/><path d="M0 8H14M0 11.5H14M4.6 5V16M9.3 5V16" stroke="#d8dde6" stroke-width="0.7"/><path d="M5.5 6.5H9.5V9H7.5V7.5H5.5V10H8.5V12.5H6.5V14H10V11" stroke="#ee6a54" stroke-width="0.7" fill="none"/></svg>
<svg style="left:1656px;top:275px" width="16" height="16" viewBox="0 0 16 16"><rect x="0.5" y="1" width="14.5" height="14" fill="#fbfbfb"/><rect x="0.5" y="0.4" width="14.5" height="4" rx="1" fill="#2c7de0"/><rect x="1.2" y="1" width="13" height="1.2" fill="#8fc0f6"/><circle cx="3" cy="1.6" r="0.9" fill="#111"/><circle cx="12.5" cy="1.6" r="0.9" fill="#111"/><path d="M5 8.2H3.2V13.2H5" stroke="#e01818" stroke-width="1.3" fill="none"/><path d="M6.4 9.2 H9.4 L10.2 8.2 H15.4 V15.6 H6.4Z" fill="#f2c230" stroke="#a8780a" stroke-width="0.9"/><path d="M7.8 13.6 L9.6 11.4 H14" stroke="#fdf0b0" stroke-width="1.1" fill="none"/></svg>
<div style="left:1680px;top:272px;width:1px;height:22px;background:#444"></div>
<svg style="left:1689px;top:275px" width="17" height="16" viewBox="0 0 17 16"><rect x="0.6" y="0.6" width="13.6" height="11.4" rx="0.8" fill="#f2f7fc" stroke="#2f86d8" stroke-width="1.3"/><rect x="1.2" y="1.2" width="12.4" height="2.2" fill="#9fd0f6"/><path d="M2.6 5.6H5.4M2.6 8.6H5.4" stroke="#8a8a8a" stroke-width="1.3"/><path d="M7 5.6H11.4M7 8.6H9.6" stroke="#d0d0d0" stroke-width="1.3"/><path d="M13.6 4.4 L7.4 12 L6.4 15.2 L9.4 13.6 L15.6 6Z" fill="#f0a428"/><path d="M7.4 12 L6.4 15.2 L9.4 13.6Z" fill="#f6d8a0"/><path d="M13.6 4.4 L15.6 6 L16.6 4.8 L14.6 3.2Z" fill="#e88ab8"/></svg>
<div class="s12" style="left:1709px;top:275.0px;height:16px;line-height:16px;color:#f4f4f4;letter-spacing:-0.25px">Edit absence</div>
<div style="left:1623px;top:297px;width:282px;height:705px;background:#d4d4d4;border:1px solid #3f3f3f"></div>
<div style="left:1663px;top:302.0px;height:16px;line-height:16px;width:200px;text-align:center;font-size:12.7px;color:#333">January 2020</div>
<div style="left:1687px;top:323.0px;height:14px;line-height:14px;width:20px;text-align:center;color:#3f9bff;font-size:11px">S</div>
<div style="left:1709px;top:323.0px;height:14px;line-height:14px;width:20px;text-align:center;color:#3f9bff;font-size:11px">M</div>
<div style="left:1731px;top:323.0px;height:14px;line-height:14px;width:20px;text-align:center;color:#3f9bff;font-size:11px">T</div>
<div style="left:1753px;top:323.0px;height:14px;line-height:14px;width:20px;text-align:center;color:#3f9bff;font-size:11px">W</div>
<div style="left:1775px;top:323.0px;height:14px;line-height:14px;width:20px;text-align:center;color:#3f9bff;font-size:11px">T</div>
<div style="left:1797px;top:323.0px;height:14px;line-height:14px;width:20px;text-align:center;color:#3f9bff;font-size:11px">F</div>
<div style="left:1819px;top:323.0px;height:14px;line-height:14px;width:20px;text-align:center;color:#3f9bff;font-size:11px">S</div>
<div style="left:1689px;top:340px;width:150px;height:1px;background:#dcdcdc"></div>
<div style="left:1754px;top:344px;width:20px;height:18px;background:#ffffff;"></div>
<div style="left:1754px;top:346.0px;height:14px;line-height:14px;width:20px;text-align:center;color:#e0103c;font-size:11.5px">1</div>
<div style="left:1776px;top:344px;width:20px;height:18px;background:#9acd32;"></div>
<div style="left:1776px;top:346.0px;height:14px;line-height:14px;width:20px;text-align:center;color:#000;font-size:11.5px">2</div>
<div style="left:1798px;top:344px;width:20px;height:18px;background:#9acd32;"></div>
<div style="left:1798px;top:346.0px;height:14px;line-height:14px;width:20px;text-align:center;color:#000;font-size:11.5px">3</div>
<div style="left:1820px;top:344px;width:20px;height:18px;background:#d2b48c;"></div>
<div style="left:1820px;top:346.0px;height:14px;line-height:14px;width:20px;text-align:center;color:#000;font-size:11.5px">4</div>
<div style="left:1688px;top:364px;width:20px;height:18px;background:#d2b48c;"></div>
<div style="left:1688px;top:366.0px;height:14px;line-height:14px;width:20px;text-align:center;color:#e0103c;font-size:11.5px">5</div>
<div style="left:1710px;top:364px;width:20px;height:18px;background:#ffffff;"></div>
<div style="left:1710px;top:366.0px;height:14px;line-height:14px;width:20px;text-align:center;color:#e0103c;font-size:11.5px">6</div>
<div style="left:1732px;top:364px;width:20px;height:18px;background:#9acd32;"></div>
<div style="left:1732px;top:366.0px;height:14px;line-height:14px;width:20px;text-align:center;color:#000;font-size:11.5px">7</div>
<div style="left:1754px;top:364px;width:20px;height:18px;background:#9acd32;"></div>
<div style="left:1754px;top:366.0px;height:14px;line-height:14px;width:20px;text-align:center;color:#000;font-size:11.5px">8</div>
<div style="left:1774px;top:362px;width:23px;height:21px;background:#f01414"></div>
<div style="left:1776px;top:364px;width:19px;height:17px;background:#9acd32;"></div>
<div style="left:1776px;top:366.0px;height:14px;line-height:14px;width:20px;text-align:center;color:#000;font-size:11.5px">9</div>
<div style="left:1798px;top:364px;width:20px;height:18px;background:#9acd32;"></div>
<div style="left:1798px;top:366.0px;height:14px;line-height:14px;width:20px;text-align:center;color:#000;font-size:11.5px">10</div>
<div style="left:1820px;top:364px;width:20px;height:18px;background:#d2b48c;"></div>
<div style="left:1820px;top:366.0px;height:14px;line-height:14px;width:20px;text-align:center;color:#000;font-size:11.5px">11</div>
<div style="left:1688px;top:384px;width:20px;height:18px;background:#d2b48c;"></div>
<div style="left:1688px;top:386.0px;height:14px;line-height:14px;width:20px;text-align:center;color:#e0103c;font-size:11.5px">12</div>
<div style="left:1710px;top:384px;width:20px;height:18px;background:#9acd32;"></div>
<div style="left:1710px;top:386.0px;height:14px;line-height:14px;width:20px;text-align:center;color:#000;font-size:11.5px">13</div>
<div style="left:1732px;top:384px;width:20px;height:18px;background:#9acd32;"></div>
<div style="left:1732px;top:386.0px;height:14px;line-height:14px;width:20px;text-align:center;color:#000;font-size:11.5px">14</div>
<div style="left:1754px;top:384px;width:20px;height:18px;background:#9acd32;"></div>
<div style="left:1754px;top:386.0px;height:14px;line-height:14px;width:20px;text-align:center;color:#000;font-size:11.5px">15</div>
<div style="left:1776px;top:384px;width:20px;height:18px;background:#9acd32;"></div>
<div style="left:1776px;top:386.0px;height:14px;line-height:14px;width:20px;text-align:center;color:#000;font-size:11.5px">16</div>
<div style="left:1798px;top:384px;width:20px;height:18px;background:#9acd32;"></div>
<div style="left:1798px;top:386.0px;height:14px;line-height:14px;width:20px;text-align:center;color:#000;font-size:11.5px">17</div>
<div style="left:1820px;top:384px;width:20px;height:18px;background:#d2b48c;"></div>
<div style="left:1820px;top:386.0px;height:14px;line-height:14px;width:20px;text-align:center;color:#000;font-size:11.5px">18</div>
<div style="left:1688px;top:404px;width:20px;height:18px;background:#d2b48c;"></div>
<div style="left:1688px;top:406.0px;height:14px;line-height:14px;width:20px;text-align:center;color:#e0103c;font-size:11.5px">19</div>
<div style="left:1710px;top:404px;width:20px;height:18px;background:#9acd32;"></div>
<div style="left:1710px;top:406.0px;height:14px;line-height:14px;width:20px;text-align:center;color:#000;font-size:11.5px">20</div>
<div style="left:1732px;top:404px;width:20px;height:18px;background:#9acd32;"></div>
<div style="left:1732px;top:406.0px;height:14px;line-height:14px;width:20px;text-align:center;color:#000;font-size:11.5px">21</div>
<div style="left:1754px;top:404px;width:20px;height:18px;background:#9acd32;"></div>
<div style="left:1754px;top:406.0px;height:14px;line-height:14px;width:20px;text-align:center;color:#000;font-size:11.5px">22</div>
<div style="left:1776px;top:404px;width:20px;height:18px;background:#9acd32;"></div>
<div style="left:1776px;top:406.0px;height:14px;line-height:14px;width:20px;text-align:center;color:#000;font-size:11.5px">23</div>
<div style="left:1798px;top:404px;width:20px;height:18px;background:linear-gradient(135deg,#eaf6d0 0%,#9acd32 42%,#9acd32 55%,#f6fce8 100%);"></div>
<div style="left:1798px;top:406.0px;height:14px;line-height:14px;width:20px;text-align:center;color:#000;font-size:11.5px;font-weight:bold">24</div>
<div style="left:1820px;top:404px;width:20px;height:18px;background:#d2b48c;"></div>
<div style="left:1820px;top:406.0px;height:14px;line-height:14px;width:20px;text-align:center;color:#000;font-size:11.5px">25</div>
<div style="left:1688px;top:424px;width:20px;height:18px;background:#d2b48c;"></div>
<div style="left:1688px;top:426.0px;height:14px;line-height:14px;width:20px;text-align:center;color:#e0103c;font-size:11.5px">26</div>
<div style="left:1710px;top:424px;width:20px;height:18px;background:#9acd32;"></div>
<div style="left:1710px;top:426.0px;height:14px;line-height:14px;width:20px;text-align:center;color:#000;font-size:11.5px">27</div>
<div style="left:1732px;top:424px;width:20px;height:18px;background:#9acd32;"></div>
<div style="left:1732px;top:426.0px;height:14px;line-height:14px;width:20px;text-align:center;color:#000;font-size:11.5px">28</div>
<div style="left:1754px;top:424px;width:20px;height:18px;background:#9acd32;"></div>
<div style="left:1754px;top:426.0px;height:14px;line-height:14px;width:20px;text-align:center;color:#000;font-size:11.5px">29</div>
<div style="left:1776px;top:424px;width:20px;height:18px;background:#9acd32;"></div>
<div style="left:1776px;top:426.0px;height:14px;line-height:14px;width:20px;text-align:center;color:#000;font-size:11.5px">30</div>
<div style="left:1798px;top:424px;width:20px;height:18px;background:#9acd32;"></div>
<div style="left:1798px;top:426.0px;height:14px;line-height:14px;width:20px;text-align:center;color:#000;font-size:11.5px">31</div>
</div></body></html>
